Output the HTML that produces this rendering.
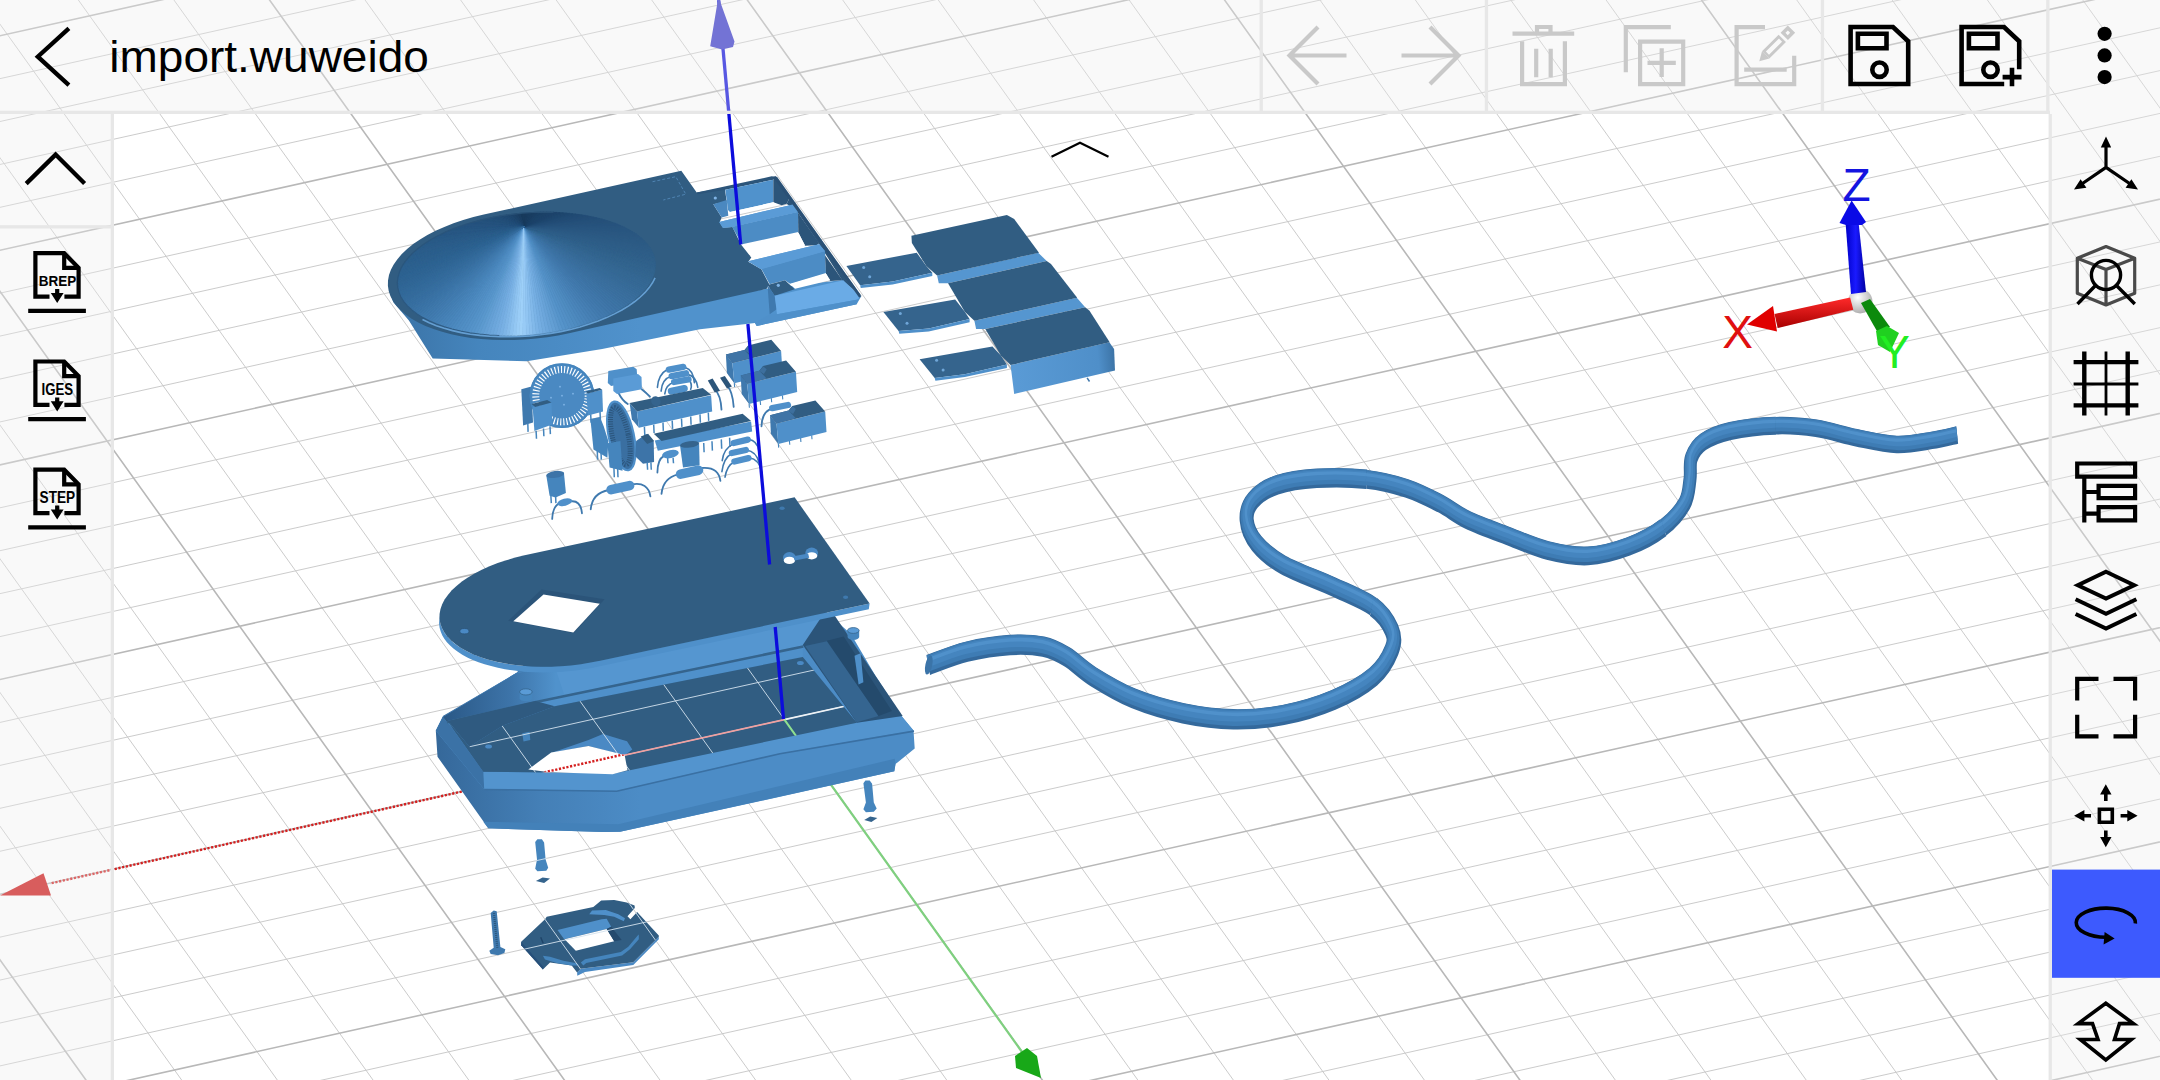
<!DOCTYPE html><html><head><meta charset="utf-8"><title>import.wuweido</title><style>html,body{margin:0;padding:0;background:#fff;overflow:hidden}svg{display:block}</style></head><body><svg width="2160" height="1080" viewBox="0 0 2160 1080">
<rect width="2160" height="1080" fill="#fff"/>
<path d="M2377.4 -919.7L3961.1 1296.2M2486.0 -900.9L-2465.2 195.4M2295.2 -901.5L3879.2 1314.6M2512.4 -863.9L-2438.6 232.5M2213.1 -883.3L3797.2 1332.9M2538.8 -827.0L-2412.0 269.6M2130.9 -865.1L3715.2 1351.3M2565.2 -790.0L-2385.4 306.8M1966.5 -828.7L3551.1 1388.0M2618.0 -716.1L-2332.3 381.0M1884.3 -810.5L3469.1 1406.4M2644.4 -679.2L-2305.7 418.1M1802.1 -792.3L3387.0 1424.7M2670.8 -642.3L-2279.1 455.2M1719.8 -774.1L3305.0 1443.1M2697.2 -605.3L-2252.5 492.3M1555.3 -737.7L3140.8 1479.8M2750.0 -531.4L-2199.3 566.5M1473.0 -719.4L3058.7 1498.2M2776.4 -494.5L-2172.8 603.6M1390.7 -701.2L2976.6 1516.6M2802.8 -457.5L-2146.2 640.7M1308.4 -683.0L2894.4 1535.0M2829.2 -420.6L-2119.6 677.8M1143.8 -646.5L2730.1 1571.8M2882.0 -346.7L-2066.5 752.0M1061.4 -628.3L2648.0 1590.2M2908.4 -309.8L-2039.9 789.1M979.0 -610.1L2565.8 1608.5M2934.8 -272.8L-2013.3 826.2M896.7 -591.8L2483.6 1626.9M2961.2 -235.9L-1986.7 863.3M731.9 -555.4L2319.1 1663.8M3014.0 -162.0L-1933.6 937.5M649.5 -537.1L2236.9 1682.2M3040.4 -125.1L-1907.0 974.6M567.1 -518.9L2154.7 1700.6M3066.8 -88.2L-1880.4 1011.7M484.6 -500.6L2072.4 1719.0M3093.2 -51.2L-1853.9 1048.8M319.7 -464.1L1907.8 1755.8M3146.0 22.6L-1800.7 1123.0M237.2 -445.9L1825.5 1774.2M3172.4 59.6L-1774.1 1160.1M154.7 -427.6L1743.2 1792.7M3198.8 96.5L-1747.6 1197.2M72.2 -409.3L1660.9 1811.1M3225.2 133.4L-1721.0 1234.3M-92.8 -372.8L1496.2 1848.0M3278.0 207.3L-1667.9 1308.5M-175.3 -354.5L1413.8 1866.4M3304.4 244.2L-1641.3 1345.6M-257.9 -336.2L1331.5 1884.8M3330.7 281.1L-1614.7 1382.7M-340.5 -318.0L1249.1 1903.3M3357.1 318.1L-1588.2 1419.7M-505.6 -281.4L1084.3 1940.2M3409.9 391.9L-1535.0 1493.9M-588.2 -263.1L1001.8 1958.6M3436.3 428.8L-1508.5 1531.0M-670.9 -244.8L919.4 1977.1M3462.7 465.8L-1481.9 1568.1M-753.5 -226.5L836.9 1995.5M3489.1 502.7L-1455.3 1605.2M-918.8 -189.9L672.0 2032.4M3541.9 576.5L-1402.2 1679.3M-1001.5 -171.6L589.5 2050.9M3568.2 613.4L-1375.6 1716.4M-1084.2 -153.3L507.0 2069.4M3594.6 650.4L-1349.1 1753.5M-1166.8 -135.0L424.5 2087.8M3621.0 687.3L-1322.5 1790.6M-1332.3 -98.4L259.4 2124.8M3673.8 761.1L-1269.4 1864.7M-1415.0 -80.1L176.8 2143.3M3700.2 798.0L-1242.8 1901.8M-1497.8 -61.8L94.3 2161.8M3726.6 834.9L-1216.3 1938.9M-1580.5 -43.4L11.7 2180.2M3752.9 871.9L-1189.7 1976.0M-1746.1 -6.8L-153.5 2217.2M3805.7 945.7L-1136.6 2050.1M-1828.9 11.6L-236.2 2235.7M3832.1 982.6L-1110.0 2087.2M-1911.7 29.9L-318.8 2254.2M3858.5 1019.5L-1083.5 2124.3M-1994.5 48.2L-401.4 2272.7M3884.8 1056.4L-1056.9 2161.4M-2160.2 84.9L-566.8 2309.7M3937.6 1130.2L-1003.8 2235.5M-2243.1 103.3L-649.5 2328.2M3964.0 1167.1L-977.3 2272.6M-2326.0 121.6L-732.2 2346.7M3990.4 1204.1L-950.7 2309.6M-2408.9 140.0L-814.9 2365.3M4016.7 1241.0L-924.2 2346.7" stroke="#c8c8c8" stroke-width="0.95" fill="none"/>
<path d="M2459.5 -937.8L4043.1 1277.9M2459.5 -937.8L-2491.8 158.3M2048.7 -846.9L3633.2 1369.6M2591.6 -753.1L-2358.8 343.9M1637.6 -755.9L3222.9 1461.5M2723.6 -568.4L-2225.9 529.4M1226.1 -664.8L2812.3 1553.4M2855.6 -383.7L-2093.0 714.9M814.3 -573.6L2401.4 1645.3M2987.6 -199.0L-1960.1 900.4M402.2 -482.4L1990.1 1737.4M3119.6 -14.3L-1827.3 1085.9M-10.3 -391.1L1578.6 1829.5M3251.6 170.4L-1694.4 1271.4M-423.0 -299.7L1166.7 1921.7M3383.5 355.0L-1561.6 1456.8M-836.1 -208.2L754.5 2014.0M3515.5 539.6L-1428.8 1642.3M-1249.6 -116.7L341.9 2106.3M3647.4 724.2L-1296.0 1827.7M-1663.3 -25.1L-70.9 2198.7M3779.3 908.8L-1163.2 2013.1M-2077.4 66.6L-484.1 2291.2M3911.2 1093.3L-1030.4 2198.4M-2491.8 158.3L-897.6 2383.8M4043.1 1277.9L-897.6 2383.8" stroke="#b8b8b8" stroke-width="1.6" fill="none"/>
<path d="M784.4 719.6L50.0 883.5" stroke="#d42020" stroke-width="2.4" stroke-dasharray="2.2 1.6" fill="none"/>
<path d="M0.0 895.5 L43.5 873.3 L51.0 895.5Z" fill="#ce1313" />
<path d="M784.4 719.6L1022.0 1052.0" stroke="#7fd07f" stroke-width="2.2" fill="none"/>
<path d="M1015.0 1056.0 L1027.0 1048.0 L1037.0 1056.0 L1041.0 1078.0 L1016.0 1068.0Z" fill="#18a818" />
<clipPath id="belowclip"><path d="M469.4 746.7L503.1 725.6L554.8 706.3L802.8 656.9L856.9 722.7L627.5 770.8L615.8 773.3L483.3 771.7Z"/></clipPath><clipPath id="belowclip2"><path d="M521.2 941.7L545.0 919.2L546.7 916.7L593.3 907.1L601.2 900.4L614.2 900.0L626.7 902.5L634.6 905.4L634.8 907.9L627.5 916.2L630.4 919.3L637.1 912.1L658.8 935.4L658.8 936.8L633.3 962.3L580.8 968.8L577.1 972.5L571.7 965.4L550.0 962.5L542.9 969.6L521.2 945.2ZM535.2 852.2L545.6 852.2L548.2 867.8L546.3 870.7L537.4 871.2L535.2 868.8ZM864.9 795.4L873.8 795.4L876.7 808.6L873.8 811.7L865.9 812.2L863.4 809.3Z"/></clipPath>
<defs>
<linearGradient id="wallg" gradientUnits="userSpaceOnUse" x1="390" y1="0" x2="640" y2="0"><stop offset="0" stop-color="#3a72a5"/><stop offset="0.35" stop-color="#4585bd"/><stop offset="1" stop-color="#5092cc"/></linearGradient>
</defs>
<path d="M389.3 291.1L393.3 302.2L408.9 320.4L432.7 358.4L526.7 361.3L602.2 348.9L700.0 329.3L755.0 323.0L756.7 326.0L856.7 304.3L860.8 297.0L842.5 280.0L766.7 288.7L700.0 300.0L535.6 271.1L402.2 266.7Z" fill="url(#wallg)" />
<path d="M569.0 333.3L558.2 335.4L547.3 337.2L536.2 338.6L525.0 339.5L513.9 340.0L502.8 340.1L491.9 339.8L481.2 339.0L470.8 337.9L460.8 336.3L451.2 334.2L442.1 331.8L433.5 329.1L425.5 325.9L418.2 322.5L411.6 318.7L405.7 314.6L400.7 310.3L396.4 305.7L393.0 300.9L390.4 296.0L388.7 290.9L387.9 285.7L388.0 280.4L389.0 275.1L390.9 269.7L393.7 264.4L397.4 259.2L401.8 254.0L407.1 249.0L413.2 244.1L420.0 239.5L427.4 235.0L435.6 230.8L444.3 226.9L453.5 223.3L463.2 220.0L473.4 217.1L483.8 214.5L681.3 170.8L696.7 192.5L724.7 187.7L726.7 201.7L713.3 204.2L721.7 217.5L719.7 222.0L723.3 227.5L732.5 227.0L740.8 244.2L751.3 257.5L748.3 261.7L761.3 269.2L769.2 284.2L766.7 288.8Z" fill="#315d82" />
<path d="M772.7 176.7L777.0 176.7L861.7 296.3L842.5 280.7L819.2 244.2L798.0 212.7L786.7 203.7L790.0 197.0Z" fill="#2c557a" />
<path d="M696.7 192.5L771.7 176.3L776.3 177.0L773.3 179.7L725.3 189.7L697.5 194.3Z" fill="#2c557a" />
<path d="M725.3 189.7L773.3 179.7L773.3 202.3L730.0 212.0L728.0 210.0Z" fill="#5092cc" />
<path d="M773.3 179.7L776.3 177.0L790.0 197.0L786.7 203.7L781.7 205.3L773.3 202.3Z" fill="#2c557a" />
<path d="M730.0 212.0L773.3 202.3L778.0 204.7L730.8 215.8Z" fill="#fff" />
<path d="M719.2 222.0L794.2 204.2L798.0 212.0L732.0 227.0L722.8 227.7Z" fill="#5a9bd6" />
<path d="M732.0 226.7L798.0 211.7L798.3 232.0L742.0 244.3Z" fill="#4c8cc5" />
<path d="M719.2 222.0L794.2 204.2L798.0 212.0L732.0 227.0L722.8 227.7Z" fill="#5a9bd6" />
<path d="M798.0 212.7L819.2 243.3L816.7 245.3L805.0 245.8L798.3 232.3Z" fill="#2c557a" />
<path d="M743.0 245.0L798.3 232.7L805.0 245.3L751.3 257.0Z" fill="#fff" />
<path d="M748.3 261.2L819.2 244.2L825.0 251.3L761.3 269.2Z" fill="#5a9bd6" />
<path d="M761.3 268.7L825.0 250.8L826.0 273.0L790.0 283.7L785.0 280.3L769.7 284.2Z" fill="#4c8cc5" />
<path d="M748.3 261.2L819.2 244.2L825.0 251.3L761.3 269.2Z" fill="#5a9bd6" />
<path d="M825.0 255.3L840.0 276.7L842.5 280.3L830.0 281.0L826.0 273.3Z" fill="#2c557a" />
<path d="M790.0 284.2L826.0 273.7L830.3 280.3L795.0 288.7Z" fill="#fff" />
<path d="M767.5 285.0L785.0 280.3L794.7 289.2L774.7 295.7Z" fill="#315d82" />
<path d="M767.5 285.3L774.7 295.7L776.7 309.2L769.7 314.2Z" fill="#3f79ae" />
<path d="M774.7 295.8L843.3 280.3L860.8 297.0L856.7 299.7L777.0 314.2Z" fill="#6aabe6" />
<path d="M777.0 314.2L856.7 299.7L856.7 304.3L756.7 326.0L755.0 323.0L769.7 314.2Z" fill="#4f90ca" />
<path d="M774.3 176.7L860.3 297.0" fill="none" stroke="#2a5075" stroke-width="2.6" />
<path d="M713.3 204.2L726.7 200.0L728.3 215.8L721.7 217.5Z" fill="#4a88c0" />
<circle cx="715.3" cy="198.0" r="1.6" fill="#7fb4e6"/>
<circle cx="778.3" cy="285.3" r="1.6" fill="#7fb4e6"/>
<path d="M652.5 181.7L675.8 176.7L685.8 194.2L663.3 200.0" fill="none" stroke="#4f84b3" stroke-width="1" stroke-dasharray="3 2"/>
<path d="M524.4 226.7L403.6 301.3L404.7 302.8Z" fill="#366d9e" stroke="#366d9e" stroke-width="0.6"/>
<path d="M524.4 226.7L404.7 302.8L405.9 304.2Z" fill="#366e9f" stroke="#366e9f" stroke-width="0.6"/>
<path d="M524.4 226.7L405.9 304.2L407.1 305.6Z" fill="#376fa0" stroke="#376fa0" stroke-width="0.6"/>
<path d="M524.4 226.7L407.1 305.6L408.4 306.9Z" fill="#376fa1" stroke="#376fa1" stroke-width="0.6"/>
<path d="M524.4 226.7L408.4 306.9L409.8 308.3Z" fill="#3870a2" stroke="#3870a2" stroke-width="0.6"/>
<path d="M524.4 226.7L409.8 308.3L411.3 309.6Z" fill="#3971a3" stroke="#3971a3" stroke-width="0.6"/>
<path d="M524.4 226.7L411.3 309.6L412.9 310.9Z" fill="#3a72a4" stroke="#3a72a4" stroke-width="0.6"/>
<path d="M524.4 226.7L412.9 310.9L414.5 312.2Z" fill="#3a73a6" stroke="#3a73a6" stroke-width="0.6"/>
<path d="M524.4 226.7L414.5 312.2L416.3 313.5Z" fill="#3b74a7" stroke="#3b74a7" stroke-width="0.6"/>
<path d="M524.4 226.7L416.3 313.5L418.1 314.7Z" fill="#3c75a8" stroke="#3c75a8" stroke-width="0.6"/>
<path d="M524.4 226.7L418.1 314.7L419.9 315.9Z" fill="#3d76aa" stroke="#3d76aa" stroke-width="0.6"/>
<path d="M524.4 226.7L419.9 315.9L421.9 317.1Z" fill="#3e78ab" stroke="#3e78ab" stroke-width="0.6"/>
<path d="M524.4 226.7L421.9 317.1L423.9 318.2Z" fill="#3f79ac" stroke="#3f79ac" stroke-width="0.6"/>
<path d="M524.4 226.7L423.9 318.2L426.0 319.3Z" fill="#407aae" stroke="#407aae" stroke-width="0.6"/>
<path d="M524.4 226.7L426.0 319.3L428.1 320.4Z" fill="#417baf" stroke="#417baf" stroke-width="0.6"/>
<path d="M524.4 226.7L428.1 320.4L430.4 321.4Z" fill="#427cb1" stroke="#427cb1" stroke-width="0.6"/>
<path d="M524.4 226.7L430.4 321.4L432.6 322.4Z" fill="#437eb2" stroke="#437eb2" stroke-width="0.6"/>
<path d="M524.4 226.7L432.6 322.4L435.0 323.4Z" fill="#447fb4" stroke="#447fb4" stroke-width="0.6"/>
<path d="M524.4 226.7L435.0 323.4L437.4 324.4Z" fill="#4580b5" stroke="#4580b5" stroke-width="0.6"/>
<path d="M524.4 226.7L437.4 324.4L439.9 325.3Z" fill="#4682b7" stroke="#4682b7" stroke-width="0.6"/>
<path d="M524.4 226.7L439.9 325.3L442.4 326.2Z" fill="#4783b8" stroke="#4783b8" stroke-width="0.6"/>
<path d="M524.4 226.7L442.4 326.2L445.0 327.0Z" fill="#4885ba" stroke="#4885ba" stroke-width="0.6"/>
<path d="M524.4 226.7L445.0 327.0L447.7 327.8Z" fill="#4986bc" stroke="#4986bc" stroke-width="0.6"/>
<path d="M524.4 226.7L447.7 327.8L450.4 328.6Z" fill="#4a87bd" stroke="#4a87bd" stroke-width="0.6"/>
<path d="M524.4 226.7L450.4 328.6L453.1 329.3Z" fill="#4c89bf" stroke="#4c89bf" stroke-width="0.6"/>
<path d="M524.4 226.7L453.1 329.3L455.9 330.0Z" fill="#4d8bc1" stroke="#4d8bc1" stroke-width="0.6"/>
<path d="M524.4 226.7L455.9 330.0L458.8 330.6Z" fill="#4f8cc2" stroke="#4f8cc2" stroke-width="0.6"/>
<path d="M524.4 226.7L458.8 330.6L461.7 331.3Z" fill="#508ec4" stroke="#508ec4" stroke-width="0.6"/>
<path d="M524.4 226.7L461.7 331.3L464.6 331.8Z" fill="#528fc5" stroke="#528fc5" stroke-width="0.6"/>
<path d="M524.4 226.7L464.6 331.8L467.6 332.4Z" fill="#5391c7" stroke="#5391c7" stroke-width="0.6"/>
<path d="M524.4 226.7L467.6 332.4L470.6 332.9Z" fill="#5593c9" stroke="#5593c9" stroke-width="0.6"/>
<path d="M524.4 226.7L470.6 332.9L473.7 333.3Z" fill="#5795cb" stroke="#5795cb" stroke-width="0.6"/>
<path d="M524.4 226.7L473.7 333.3L476.8 333.7Z" fill="#5997cd" stroke="#5997cd" stroke-width="0.6"/>
<path d="M524.4 226.7L476.8 333.7L479.9 334.1Z" fill="#5c9acf" stroke="#5c9acf" stroke-width="0.6"/>
<path d="M524.4 226.7L479.9 334.1L483.1 334.4Z" fill="#609dd2" stroke="#609dd2" stroke-width="0.6"/>
<path d="M524.4 226.7L483.1 334.4L486.3 334.7Z" fill="#64a0d5" stroke="#64a0d5" stroke-width="0.6"/>
<path d="M524.4 226.7L486.3 334.7L489.5 335.0Z" fill="#68a3d8" stroke="#68a3d8" stroke-width="0.6"/>
<path d="M524.4 226.7L489.5 335.0L492.8 335.2Z" fill="#6ca6db" stroke="#6ca6db" stroke-width="0.6"/>
<path d="M524.4 226.7L492.8 335.2L496.0 335.4Z" fill="#6fa9de" stroke="#6fa9de" stroke-width="0.6"/>
<path d="M524.4 226.7L496.0 335.4L499.3 335.5Z" fill="#74ace1" stroke="#74ace1" stroke-width="0.6"/>
<path d="M524.4 226.7L499.3 335.5L502.6 335.6Z" fill="#78b0e4" stroke="#78b0e4" stroke-width="0.6"/>
<path d="M524.4 226.7L502.6 335.6L506.0 335.6Z" fill="#7eb5e7" stroke="#7eb5e7" stroke-width="0.6"/>
<path d="M524.4 226.7L506.0 335.6L509.3 335.6Z" fill="#85bbeb" stroke="#85bbeb" stroke-width="0.6"/>
<path d="M524.4 226.7L509.3 335.6L512.7 335.6Z" fill="#8cc1ef" stroke="#8cc1ef" stroke-width="0.6"/>
<path d="M524.4 226.7L512.7 335.6L516.0 335.5Z" fill="#93c7f3" stroke="#93c7f3" stroke-width="0.6"/>
<path d="M524.4 226.7L516.0 335.5L519.4 335.3Z" fill="#9acdf7" stroke="#9acdf7" stroke-width="0.6"/>
<path d="M524.4 226.7L519.4 335.3L522.8 335.2Z" fill="#9fd1f9" stroke="#9fd1f9" stroke-width="0.6"/>
<path d="M524.4 226.7L522.8 335.2L526.2 334.9Z" fill="#98cbf6" stroke="#98cbf6" stroke-width="0.6"/>
<path d="M524.4 226.7L526.2 334.9L529.5 334.7Z" fill="#91c5f2" stroke="#91c5f2" stroke-width="0.6"/>
<path d="M524.4 226.7L529.5 334.7L532.9 334.4Z" fill="#8abfee" stroke="#8abfee" stroke-width="0.6"/>
<path d="M524.4 226.7L532.9 334.4L536.3 334.1Z" fill="#82b9ea" stroke="#82b9ea" stroke-width="0.6"/>
<path d="M524.4 226.7L536.3 334.1L539.6 333.7Z" fill="#7bb3e6" stroke="#7bb3e6" stroke-width="0.6"/>
<path d="M524.4 226.7L539.6 333.7L543.0 333.2Z" fill="#75aee2" stroke="#75aee2" stroke-width="0.6"/>
<path d="M524.4 226.7L543.0 333.2L546.3 332.8Z" fill="#71aade" stroke="#71aade" stroke-width="0.6"/>
<path d="M524.4 226.7L546.3 332.8L549.7 332.3Z" fill="#6ca6db" stroke="#6ca6db" stroke-width="0.6"/>
<path d="M524.4 226.7L549.7 332.3L553.0 331.7Z" fill="#68a2d7" stroke="#68a2d7" stroke-width="0.6"/>
<path d="M524.4 226.7L553.0 331.7L556.3 331.2Z" fill="#639fd4" stroke="#639fd4" stroke-width="0.6"/>
<path d="M524.4 226.7L556.3 331.2L559.6 330.5Z" fill="#5f9bd0" stroke="#5f9bd0" stroke-width="0.6"/>
<path d="M524.4 226.7L559.6 330.5L562.8 329.9Z" fill="#5a97cd" stroke="#5a97cd" stroke-width="0.6"/>
<path d="M524.4 226.7L562.8 329.9L566.0 329.2Z" fill="#5694ca" stroke="#5694ca" stroke-width="0.6"/>
<path d="M524.4 226.7L566.0 329.2L569.2 328.4Z" fill="#5391c7" stroke="#5391c7" stroke-width="0.6"/>
<path d="M524.4 226.7L569.2 328.4L572.4 327.7Z" fill="#528fc5" stroke="#528fc5" stroke-width="0.6"/>
<path d="M524.4 226.7L572.4 327.7L575.5 326.9Z" fill="#508dc2" stroke="#508dc2" stroke-width="0.6"/>
<path d="M524.4 226.7L575.5 326.9L578.7 326.0Z" fill="#4e8bc0" stroke="#4e8bc0" stroke-width="0.6"/>
<path d="M524.4 226.7L578.7 326.0L581.7 325.1Z" fill="#4d89be" stroke="#4d89be" stroke-width="0.6"/>
<path d="M524.4 226.7L581.7 325.1L584.8 324.2Z" fill="#4b87bc" stroke="#4b87bc" stroke-width="0.6"/>
<path d="M524.4 226.7L584.8 324.2L587.7 323.3Z" fill="#4a85ba" stroke="#4a85ba" stroke-width="0.6"/>
<path d="M524.4 226.7L587.7 323.3L590.7 322.3Z" fill="#4983b8" stroke="#4983b8" stroke-width="0.6"/>
<path d="M524.4 226.7L590.7 322.3L593.6 321.3Z" fill="#4781b6" stroke="#4781b6" stroke-width="0.6"/>
<path d="M524.4 226.7L593.6 321.3L596.5 320.2Z" fill="#467fb4" stroke="#467fb4" stroke-width="0.6"/>
<path d="M524.4 226.7L596.5 320.2L599.3 319.1Z" fill="#457eb2" stroke="#457eb2" stroke-width="0.6"/>
<path d="M524.4 226.7L599.3 319.1L602.0 318.0Z" fill="#437cb0" stroke="#437cb0" stroke-width="0.6"/>
<path d="M524.4 226.7L602.0 318.0L604.7 316.9Z" fill="#427aae" stroke="#427aae" stroke-width="0.6"/>
<path d="M524.4 226.7L604.7 316.9L607.4 315.7Z" fill="#4179ad" stroke="#4179ad" stroke-width="0.6"/>
<path d="M524.4 226.7L607.4 315.7L610.0 314.5Z" fill="#4078ab" stroke="#4078ab" stroke-width="0.6"/>
<path d="M524.4 226.7L610.0 314.5L612.5 313.2Z" fill="#4077aa" stroke="#4077aa" stroke-width="0.6"/>
<path d="M524.4 226.7L612.5 313.2L615.0 312.0Z" fill="#3f76a9" stroke="#3f76a9" stroke-width="0.6"/>
<path d="M524.4 226.7L615.0 312.0L617.5 310.7Z" fill="#3e75a7" stroke="#3e75a7" stroke-width="0.6"/>
<path d="M524.4 226.7L617.5 310.7L619.8 309.4Z" fill="#3e74a6" stroke="#3e74a6" stroke-width="0.6"/>
<path d="M524.4 226.7L619.8 309.4L622.1 308.1Z" fill="#3d74a5" stroke="#3d74a5" stroke-width="0.6"/>
<path d="M524.4 226.7L622.1 308.1L624.3 306.7Z" fill="#3d73a4" stroke="#3d73a4" stroke-width="0.6"/>
<path d="M524.4 226.7L624.3 306.7L626.5 305.3Z" fill="#3c72a2" stroke="#3c72a2" stroke-width="0.6"/>
<path d="M524.4 226.7L626.5 305.3L628.6 303.9Z" fill="#3c71a1" stroke="#3c71a1" stroke-width="0.6"/>
<path d="M524.4 226.7L628.6 303.9L630.6 302.5Z" fill="#3b70a0" stroke="#3b70a0" stroke-width="0.6"/>
<path d="M524.4 226.7L630.6 302.5L632.6 301.1Z" fill="#3b709f" stroke="#3b709f" stroke-width="0.6"/>
<path d="M524.4 226.7L632.6 301.1L634.5 299.6Z" fill="#3a6f9e" stroke="#3a6f9e" stroke-width="0.6"/>
<path d="M524.4 226.7L634.5 299.6L636.3 298.1Z" fill="#3a6e9d" stroke="#3a6e9d" stroke-width="0.6"/>
<path d="M524.4 226.7L636.3 298.1L638.0 296.6Z" fill="#396e9c" stroke="#396e9c" stroke-width="0.6"/>
<path d="M524.4 226.7L638.0 296.6L639.7 295.1Z" fill="#396d9b" stroke="#396d9b" stroke-width="0.6"/>
<path d="M524.4 226.7L639.7 295.1L641.2 293.6Z" fill="#386c9a" stroke="#386c9a" stroke-width="0.6"/>
<path d="M524.4 226.7L641.2 293.6L642.7 292.1Z" fill="#386c99" stroke="#386c99" stroke-width="0.6"/>
<path d="M524.4 226.7L642.7 292.1L644.2 290.5Z" fill="#376b98" stroke="#376b98" stroke-width="0.6"/>
<path d="M524.4 226.7L644.2 290.5L645.5 289.0Z" fill="#376a97" stroke="#376a97" stroke-width="0.6"/>
<path d="M524.4 226.7L645.5 289.0L646.8 287.4Z" fill="#366a96" stroke="#366a96" stroke-width="0.6"/>
<path d="M524.4 226.7L646.8 287.4L647.9 285.8Z" fill="#366995" stroke="#366995" stroke-width="0.6"/>
<path d="M524.4 226.7L647.9 285.8L649.0 284.2Z" fill="#366995" stroke="#366995" stroke-width="0.6"/>
<path d="M524.4 226.7L649.0 284.2L650.0 282.6Z" fill="#356894" stroke="#356894" stroke-width="0.6"/>
<path d="M524.4 226.7L650.0 282.6L651.0 281.0Z" fill="#356893" stroke="#356893" stroke-width="0.6"/>
<path d="M524.4 226.7L651.0 281.0L651.8 279.4Z" fill="#346792" stroke="#346792" stroke-width="0.6"/>
<path d="M524.4 226.7L651.8 279.4L652.5 277.8Z" fill="#346791" stroke="#346791" stroke-width="0.6"/>
<path d="M524.4 226.7L652.5 277.8L653.2 276.2Z" fill="#346690" stroke="#346690" stroke-width="0.6"/>
<path d="M524.4 226.7L653.2 276.2L653.8 274.6Z" fill="#336590" stroke="#336590" stroke-width="0.6"/>
<path d="M524.4 226.7L653.8 274.6L654.3 273.0Z" fill="#33658f" stroke="#33658f" stroke-width="0.6"/>
<path d="M524.4 226.7L654.3 273.0L654.7 271.3Z" fill="#33648e" stroke="#33648e" stroke-width="0.6"/>
<path d="M524.4 226.7L654.7 271.3L655.0 269.7Z" fill="#32648e" stroke="#32648e" stroke-width="0.6"/>
<path d="M524.4 226.7L655.0 269.7L655.2 268.1Z" fill="#32638d" stroke="#32638d" stroke-width="0.6"/>
<path d="M524.4 226.7L655.2 268.1L655.4 266.5Z" fill="#31638d" stroke="#31638d" stroke-width="0.6"/>
<path d="M524.4 226.7L655.4 266.5L655.4 264.9Z" fill="#31628c" stroke="#31628c" stroke-width="0.6"/>
<path d="M524.4 226.7L655.4 264.9L655.4 263.3Z" fill="#31628c" stroke="#31628c" stroke-width="0.6"/>
<path d="M524.4 226.7L655.4 263.3L655.3 261.7Z" fill="#30618b" stroke="#30618b" stroke-width="0.6"/>
<path d="M524.4 226.7L655.3 261.7L655.0 260.1Z" fill="#30608a" stroke="#30608a" stroke-width="0.6"/>
<path d="M524.4 226.7L655.0 260.1L654.7 258.6Z" fill="#30608a" stroke="#30608a" stroke-width="0.6"/>
<path d="M524.4 226.7L654.7 258.6L654.3 257.0Z" fill="#2f5f89" stroke="#2f5f89" stroke-width="0.6"/>
<path d="M524.4 226.7L654.3 257.0L653.9 255.5Z" fill="#2f5f89" stroke="#2f5f89" stroke-width="0.6"/>
<path d="M524.4 226.7L653.9 255.5L653.3 253.9Z" fill="#2f5e88" stroke="#2f5e88" stroke-width="0.6"/>
<path d="M524.4 226.7L653.3 253.9L652.6 252.4Z" fill="#2e5e88" stroke="#2e5e88" stroke-width="0.6"/>
<path d="M524.4 226.7L652.6 252.4L651.9 250.9Z" fill="#2e5d87" stroke="#2e5d87" stroke-width="0.6"/>
<path d="M524.4 226.7L651.9 250.9L651.1 249.4Z" fill="#2e5d87" stroke="#2e5d87" stroke-width="0.6"/>
<path d="M524.4 226.7L651.1 249.4L650.2 247.9Z" fill="#2d5c86" stroke="#2d5c86" stroke-width="0.6"/>
<path d="M524.4 226.7L650.2 247.9L649.2 246.5Z" fill="#2d5c86" stroke="#2d5c86" stroke-width="0.6"/>
<path d="M524.4 226.7L649.2 246.5L648.1 245.0Z" fill="#2d5b85" stroke="#2d5b85" stroke-width="0.6"/>
<path d="M524.4 226.7L648.1 245.0L646.9 243.6Z" fill="#2c5b85" stroke="#2c5b85" stroke-width="0.6"/>
<path d="M524.4 226.7L646.9 243.6L645.7 242.2Z" fill="#2c5a84" stroke="#2c5a84" stroke-width="0.6"/>
<path d="M524.4 226.7L645.7 242.2L644.4 240.9Z" fill="#2c5a84" stroke="#2c5a84" stroke-width="0.6"/>
<path d="M524.4 226.7L644.4 240.9L643.0 239.5Z" fill="#2c5983" stroke="#2c5983" stroke-width="0.6"/>
<path d="M524.4 226.7L643.0 239.5L641.5 238.2Z" fill="#2b5983" stroke="#2b5983" stroke-width="0.6"/>
<path d="M524.4 226.7L641.5 238.2L639.9 236.9Z" fill="#2b5983" stroke="#2b5983" stroke-width="0.6"/>
<path d="M524.4 226.7L639.9 236.9L638.3 235.6Z" fill="#2b5882" stroke="#2b5882" stroke-width="0.6"/>
<path d="M524.4 226.7L638.3 235.6L636.5 234.3Z" fill="#2a5882" stroke="#2a5882" stroke-width="0.6"/>
<path d="M524.4 226.7L636.5 234.3L634.7 233.1Z" fill="#2a5781" stroke="#2a5781" stroke-width="0.6"/>
<path d="M524.4 226.7L634.7 233.1L632.9 231.9Z" fill="#2a5781" stroke="#2a5781" stroke-width="0.6"/>
<path d="M524.4 226.7L632.9 231.9L630.9 230.7Z" fill="#295680" stroke="#295680" stroke-width="0.6"/>
<path d="M524.4 226.7L630.9 230.7L628.9 229.6Z" fill="#295680" stroke="#295680" stroke-width="0.6"/>
<path d="M524.4 226.7L628.9 229.6L626.8 228.5Z" fill="#29557f" stroke="#29557f" stroke-width="0.6"/>
<path d="M524.4 226.7L626.8 228.5L624.7 227.4Z" fill="#28557f" stroke="#28557f" stroke-width="0.6"/>
<path d="M524.4 226.7L624.7 227.4L622.4 226.4Z" fill="#28547e" stroke="#28547e" stroke-width="0.6"/>
<path d="M524.4 226.7L622.4 226.4L620.2 225.4Z" fill="#28547e" stroke="#28547e" stroke-width="0.6"/>
<path d="M524.4 226.7L620.2 225.4L617.8 224.4Z" fill="#27537d" stroke="#27537d" stroke-width="0.6"/>
<path d="M524.4 226.7L617.8 224.4L615.4 223.4Z" fill="#27537d" stroke="#27537d" stroke-width="0.6"/>
<path d="M524.4 226.7L615.4 223.4L612.9 222.5Z" fill="#27527c" stroke="#27527c" stroke-width="0.6"/>
<path d="M524.4 226.7L612.9 222.5L610.4 221.6Z" fill="#26527b" stroke="#26527b" stroke-width="0.6"/>
<path d="M524.4 226.7L610.4 221.6L607.8 220.8Z" fill="#26517b" stroke="#26517b" stroke-width="0.6"/>
<path d="M524.4 226.7L607.8 220.8L605.1 220.0Z" fill="#26517a" stroke="#26517a" stroke-width="0.6"/>
<path d="M524.4 226.7L605.1 220.0L602.4 219.2Z" fill="#25507a" stroke="#25507a" stroke-width="0.6"/>
<path d="M524.4 226.7L602.4 219.2L599.7 218.5Z" fill="#255079" stroke="#255079" stroke-width="0.6"/>
<path d="M524.4 226.7L599.7 218.5L596.9 217.8Z" fill="#244f78" stroke="#244f78" stroke-width="0.6"/>
<path d="M524.4 226.7L596.9 217.8L594.0 217.2Z" fill="#244e78" stroke="#244e78" stroke-width="0.6"/>
<path d="M524.4 226.7L594.0 217.2L591.1 216.5Z" fill="#244e77" stroke="#244e77" stroke-width="0.6"/>
<path d="M524.4 226.7L591.1 216.5L588.2 216.0Z" fill="#234d76" stroke="#234d76" stroke-width="0.6"/>
<path d="M524.4 226.7L588.2 216.0L585.2 215.4Z" fill="#234c75" stroke="#234c75" stroke-width="0.6"/>
<path d="M524.4 226.7L585.2 215.4L582.2 214.9Z" fill="#224c75" stroke="#224c75" stroke-width="0.6"/>
<path d="M524.4 226.7L582.2 214.9L579.1 214.5Z" fill="#214b74" stroke="#214b74" stroke-width="0.6"/>
<path d="M524.4 226.7L579.1 214.5L576.0 214.1Z" fill="#214a73" stroke="#214a73" stroke-width="0.6"/>
<path d="M524.4 226.7L576.0 214.1L572.9 213.7Z" fill="#204972" stroke="#204972" stroke-width="0.6"/>
<path d="M524.4 226.7L572.9 213.7L569.7 213.4Z" fill="#1f4870" stroke="#1f4870" stroke-width="0.6"/>
<path d="M524.4 226.7L569.7 213.4L566.5 213.1Z" fill="#1f476f" stroke="#1f476f" stroke-width="0.6"/>
<path d="M524.4 226.7L566.5 213.1L563.3 212.8Z" fill="#1e466e" stroke="#1e466e" stroke-width="0.6"/>
<path d="M524.4 226.7L563.3 212.8L560.0 212.6Z" fill="#1d446c" stroke="#1d446c" stroke-width="0.6"/>
<path d="M524.4 226.7L560.0 212.6L556.8 212.4Z" fill="#1c436b" stroke="#1c436b" stroke-width="0.6"/>
<path d="M524.4 226.7L556.8 212.4L553.5 212.3Z" fill="#1c426a" stroke="#1c426a" stroke-width="0.6"/>
<path d="M524.4 226.7L553.5 212.3L550.2 212.2Z" fill="#1b4269" stroke="#1b4269" stroke-width="0.6"/>
<path d="M524.4 226.7L550.2 212.2L546.8 212.2Z" fill="#1b4168" stroke="#1b4168" stroke-width="0.6"/>
<path d="M524.4 226.7L546.8 212.2L543.5 212.2Z" fill="#1b4167" stroke="#1b4167" stroke-width="0.6"/>
<path d="M524.4 226.7L543.5 212.2L540.1 212.2Z" fill="#1a4066" stroke="#1a4066" stroke-width="0.6"/>
<path d="M524.4 226.7L540.1 212.2L536.8 212.3Z" fill="#1a3f64" stroke="#1a3f64" stroke-width="0.6"/>
<path d="M524.4 226.7L536.8 212.3L533.4 212.5Z" fill="#193d62" stroke="#193d62" stroke-width="0.6"/>
<path d="M524.4 226.7L533.4 212.5L530.0 212.6Z" fill="#183c60" stroke="#183c60" stroke-width="0.6"/>
<path d="M524.4 226.7L530.0 212.6L526.6 212.9Z" fill="#173b5e" stroke="#173b5e" stroke-width="0.6"/>
<path d="M524.4 226.7L526.6 212.9L523.3 213.1Z" fill="#17395c" stroke="#17395c" stroke-width="0.6"/>
<path d="M524.4 226.7L523.3 213.1L519.9 213.4Z" fill="#16395b" stroke="#16395b" stroke-width="0.6"/>
<path d="M524.4 226.7L519.9 213.4L516.5 213.7Z" fill="#193d61" stroke="#193d61" stroke-width="0.6"/>
<path d="M524.4 226.7L516.5 213.7L513.2 214.1Z" fill="#1b4066" stroke="#1b4066" stroke-width="0.6"/>
<path d="M524.4 226.7L513.2 214.1L509.8 214.6Z" fill="#1c436a" stroke="#1c436a" stroke-width="0.6"/>
<path d="M524.4 226.7L509.8 214.6L506.5 215.0Z" fill="#1e466e" stroke="#1e466e" stroke-width="0.6"/>
<path d="M524.4 226.7L506.5 215.0L503.1 215.5Z" fill="#1f4871" stroke="#1f4871" stroke-width="0.6"/>
<path d="M524.4 226.7L503.1 215.5L499.8 216.1Z" fill="#204a73" stroke="#204a73" stroke-width="0.6"/>
<path d="M524.4 226.7L499.8 216.1L496.5 216.6Z" fill="#214b75" stroke="#214b75" stroke-width="0.6"/>
<path d="M524.4 226.7L496.5 216.6L493.2 217.3Z" fill="#224d77" stroke="#224d77" stroke-width="0.6"/>
<path d="M524.4 226.7L493.2 217.3L490.0 217.9Z" fill="#224e78" stroke="#224e78" stroke-width="0.6"/>
<path d="M524.4 226.7L490.0 217.9L486.8 218.6Z" fill="#234f79" stroke="#234f79" stroke-width="0.6"/>
<path d="M524.4 226.7L486.8 218.6L483.6 219.4Z" fill="#23507a" stroke="#23507a" stroke-width="0.6"/>
<path d="M524.4 226.7L483.6 219.4L480.4 220.1Z" fill="#24507b" stroke="#24507b" stroke-width="0.6"/>
<path d="M524.4 226.7L480.4 220.1L477.3 220.9Z" fill="#24517c" stroke="#24517c" stroke-width="0.6"/>
<path d="M524.4 226.7L477.3 220.9L474.1 221.8Z" fill="#25527d" stroke="#25527d" stroke-width="0.6"/>
<path d="M524.4 226.7L474.1 221.8L471.1 222.7Z" fill="#25527d" stroke="#25527d" stroke-width="0.6"/>
<path d="M524.4 226.7L471.1 222.7L468.0 223.6Z" fill="#25537e" stroke="#25537e" stroke-width="0.6"/>
<path d="M524.4 226.7L468.0 223.6L465.1 224.5Z" fill="#25537f" stroke="#25537f" stroke-width="0.6"/>
<path d="M524.4 226.7L465.1 224.5L462.1 225.5Z" fill="#26537f" stroke="#26537f" stroke-width="0.6"/>
<path d="M524.4 226.7L462.1 225.5L459.2 226.5Z" fill="#265480" stroke="#265480" stroke-width="0.6"/>
<path d="M524.4 226.7L459.2 226.5L456.3 227.6Z" fill="#265480" stroke="#265480" stroke-width="0.6"/>
<path d="M524.4 226.7L456.3 227.6L453.5 228.7Z" fill="#265581" stroke="#265581" stroke-width="0.6"/>
<path d="M524.4 226.7L453.5 228.7L450.8 229.8Z" fill="#275582" stroke="#275582" stroke-width="0.6"/>
<path d="M524.4 226.7L450.8 229.8L448.1 230.9Z" fill="#275682" stroke="#275682" stroke-width="0.6"/>
<path d="M524.4 226.7L448.1 230.9L445.4 232.1Z" fill="#275783" stroke="#275783" stroke-width="0.6"/>
<path d="M524.4 226.7L445.4 232.1L442.8 233.3Z" fill="#285784" stroke="#285784" stroke-width="0.6"/>
<path d="M524.4 226.7L442.8 233.3L440.3 234.6Z" fill="#285884" stroke="#285884" stroke-width="0.6"/>
<path d="M524.4 226.7L440.3 234.6L437.8 235.8Z" fill="#285885" stroke="#285885" stroke-width="0.6"/>
<path d="M524.4 226.7L437.8 235.8L435.3 237.1Z" fill="#285885" stroke="#285885" stroke-width="0.6"/>
<path d="M524.4 226.7L435.3 237.1L433.0 238.4Z" fill="#295986" stroke="#295986" stroke-width="0.6"/>
<path d="M524.4 226.7L433.0 238.4L430.7 239.7Z" fill="#295986" stroke="#295986" stroke-width="0.6"/>
<path d="M524.4 226.7L430.7 239.7L428.5 241.1Z" fill="#295a87" stroke="#295a87" stroke-width="0.6"/>
<path d="M524.4 226.7L428.5 241.1L426.3 242.5Z" fill="#295a87" stroke="#295a87" stroke-width="0.6"/>
<path d="M524.4 226.7L426.3 242.5L424.2 243.9Z" fill="#2a5b88" stroke="#2a5b88" stroke-width="0.6"/>
<path d="M524.4 226.7L424.2 243.9L422.2 245.3Z" fill="#2a5b88" stroke="#2a5b88" stroke-width="0.6"/>
<path d="M524.4 226.7L422.2 245.3L420.2 246.7Z" fill="#2a5c89" stroke="#2a5c89" stroke-width="0.6"/>
<path d="M524.4 226.7L420.2 246.7L418.3 248.2Z" fill="#2a5c89" stroke="#2a5c89" stroke-width="0.6"/>
<path d="M524.4 226.7L418.3 248.2L416.5 249.7Z" fill="#2a5c8a" stroke="#2a5c8a" stroke-width="0.6"/>
<path d="M524.4 226.7L416.5 249.7L414.8 251.2Z" fill="#2b5d8a" stroke="#2b5d8a" stroke-width="0.6"/>
<path d="M524.4 226.7L414.8 251.2L413.1 252.7Z" fill="#2b5d8b" stroke="#2b5d8b" stroke-width="0.6"/>
<path d="M524.4 226.7L413.1 252.7L411.6 254.2Z" fill="#2b5e8b" stroke="#2b5e8b" stroke-width="0.6"/>
<path d="M524.4 226.7L411.6 254.2L410.1 255.7Z" fill="#2b5e8c" stroke="#2b5e8c" stroke-width="0.6"/>
<path d="M524.4 226.7L410.1 255.7L408.6 257.3Z" fill="#2b5e8c" stroke="#2b5e8c" stroke-width="0.6"/>
<path d="M524.4 226.7L408.6 257.3L407.3 258.8Z" fill="#2c5f8d" stroke="#2c5f8d" stroke-width="0.6"/>
<path d="M524.4 226.7L407.3 258.8L406.0 260.4Z" fill="#2c5f8d" stroke="#2c5f8d" stroke-width="0.6"/>
<path d="M524.4 226.7L406.0 260.4L404.9 262.0Z" fill="#2c5f8d" stroke="#2c5f8d" stroke-width="0.6"/>
<path d="M524.4 226.7L404.9 262.0L403.8 263.6Z" fill="#2c608e" stroke="#2c608e" stroke-width="0.6"/>
<path d="M524.4 226.7L403.8 263.6L402.8 265.2Z" fill="#2c608e" stroke="#2c608e" stroke-width="0.6"/>
<path d="M524.4 226.7L402.8 265.2L401.8 266.8Z" fill="#2d618f" stroke="#2d618f" stroke-width="0.6"/>
<path d="M524.4 226.7L401.8 266.8L401.0 268.4Z" fill="#2d618f" stroke="#2d618f" stroke-width="0.6"/>
<path d="M524.4 226.7L401.0 268.4L400.3 270.0Z" fill="#2d6190" stroke="#2d6190" stroke-width="0.6"/>
<path d="M524.4 226.7L400.3 270.0L399.6 271.6Z" fill="#2d6290" stroke="#2d6290" stroke-width="0.6"/>
<path d="M524.4 226.7L399.6 271.6L399.0 273.2Z" fill="#2e6291" stroke="#2e6291" stroke-width="0.6"/>
<path d="M524.4 226.7L399.0 273.2L398.5 274.8Z" fill="#2e6391" stroke="#2e6391" stroke-width="0.6"/>
<path d="M524.4 226.7L398.5 274.8L398.1 276.5Z" fill="#2e6392" stroke="#2e6392" stroke-width="0.6"/>
<path d="M524.4 226.7L398.1 276.5L397.8 278.1Z" fill="#2e6392" stroke="#2e6392" stroke-width="0.6"/>
<path d="M524.4 226.7L397.8 278.1L397.6 279.7Z" fill="#2e6493" stroke="#2e6493" stroke-width="0.6"/>
<path d="M524.4 226.7L397.6 279.7L397.4 281.3Z" fill="#2f6493" stroke="#2f6493" stroke-width="0.6"/>
<path d="M524.4 226.7L397.4 281.3L397.4 282.9Z" fill="#2f6594" stroke="#2f6594" stroke-width="0.6"/>
<path d="M524.4 226.7L397.4 282.9L397.4 284.5Z" fill="#2f6594" stroke="#2f6594" stroke-width="0.6"/>
<path d="M524.4 226.7L397.4 284.5L397.5 286.1Z" fill="#306695" stroke="#306695" stroke-width="0.6"/>
<path d="M524.4 226.7L397.5 286.1L397.8 287.7Z" fill="#306696" stroke="#306696" stroke-width="0.6"/>
<path d="M524.4 226.7L397.8 287.7L398.1 289.2Z" fill="#316797" stroke="#316797" stroke-width="0.6"/>
<path d="M524.4 226.7L398.1 289.2L398.5 290.8Z" fill="#316897" stroke="#316897" stroke-width="0.6"/>
<path d="M524.4 226.7L398.5 290.8L398.9 292.3Z" fill="#326898" stroke="#326898" stroke-width="0.6"/>
<path d="M524.4 226.7L398.9 292.3L399.5 293.9Z" fill="#326999" stroke="#326999" stroke-width="0.6"/>
<path d="M524.4 226.7L399.5 293.9L400.2 295.4Z" fill="#336a9a" stroke="#336a9a" stroke-width="0.6"/>
<path d="M524.4 226.7L400.2 295.4L400.9 296.9Z" fill="#336a9b" stroke="#336a9b" stroke-width="0.6"/>
<path d="M524.4 226.7L400.9 296.9L401.7 298.4Z" fill="#346b9c" stroke="#346b9c" stroke-width="0.6"/>
<path d="M524.4 226.7L401.7 298.4L402.6 299.9Z" fill="#346c9c" stroke="#346c9c" stroke-width="0.6"/>
<path d="M524.4 226.7L402.6 299.9L403.6 301.3Z" fill="#356c9d" stroke="#356c9d" stroke-width="0.6"/>
<path d="M553.5 212.3L543.2 212.2L532.9 212.5L522.5 213.2L512.1 214.3L501.9 215.7L491.7 217.6L481.9 219.8L472.3 222.3L463.0 225.2L454.2 228.4L445.8 231.9L438.0 235.7L430.7 239.7L424.0 244.0L418.1 248.4L412.8 253.0L408.2 257.8L404.4 262.6L401.4 267.5L399.3 272.5L397.9 277.5L397.4 282.4L397.7 287.3L398.9 292.1L400.8 296.8L403.6 301.3L407.2 305.7L411.6 309.8L416.7 313.7L422.5 317.4L429.0 320.8L436.1 323.9L443.8 326.6L452.1 329.0L460.8 331.1L469.9 332.8L479.5 334.1L489.3 335.0L499.3 335.5" fill="none" stroke="#2a5479" stroke-width="1.2" opacity="0.8"/>
<path d="M422.5 319.5L429.2 322.7L436.4 325.7L444.2 328.3L452.5 330.6L461.2 332.6L470.3 334.2L479.8 335.4L489.6 336.3L499.6 336.7L509.7 336.8L520.0 336.5L530.3 335.9L540.5 334.8L550.7 333.4L560.8 331.6L570.6 329.4L580.1 326.9L589.4 324.1L598.2 321.0L606.6 317.6L614.5 313.9L621.9 310.0L628.7 305.9L634.8 301.5L640.3 297.0L645.1 292.4L649.2 287.6L652.5 282.8L655.1 277.9" fill="none" stroke="#6aa6dc" stroke-width="1.6" opacity="0.9"/>
<path d="M846.4 265.9L916.7 252.7L926.3 265.9L932.3 272.7L892.6 281.6L860.1 285.2Z" fill="#35648d" />
<path d="M860.1 285.2L892.6 281.6L932.3 272.7L932.3 276.0L892.6 284.5L860.8 288.1Z" fill="#4f90ca" />
<path d="M883.4 312.1L955.2 299.6L964.8 311.7L969.6 318.9L928.7 328.5L898.6 330.9Z" fill="#35648d" />
<path d="M898.6 330.9L928.7 328.5L969.6 318.9L969.6 322.3L928.7 331.4L899.3 333.8Z" fill="#4f90ca" />
<path d="M919.6 359.3L992.5 346.6L1000.9 355.5L1006.9 364.6L964.8 374.3L934.7 377.9Z" fill="#35648d" />
<path d="M934.7 377.9L964.8 374.3L1006.9 364.6L1006.9 368.0L964.8 377.1L935.4 380.8Z" fill="#4f90ca" />
<circle cx="863.7" cy="267.6" r="1.5" fill="#6fa6d8"/>
<circle cx="869.7" cy="276.8" r="1.5" fill="#6fa6d8"/>
<circle cx="900.3" cy="313.6" r="1.5" fill="#6fa6d8"/>
<circle cx="907.0" cy="323.2" r="1.5" fill="#6fa6d8"/>
<circle cx="936.6" cy="360.3" r="1.5" fill="#6fa6d8"/>
<circle cx="943.1" cy="369.9" r="1.5" fill="#6fa6d8"/>
<defs><linearGradient id="btnf" gradientUnits="userSpaceOnUse" x1="1010" y1="370" x2="1114" y2="360"><stop offset="0" stop-color="#5a9bd6"/><stop offset="0.85" stop-color="#4f8fc9"/><stop offset="1" stop-color="#3d75a8"/></linearGradient></defs>
<path d="M937.1 275.6L1038.2 252.7L1046.7 261.1L948.0 283.3L938.8 283.3Z" fill="#5596d0" />
<path d="M911.4 235.8L1006.9 214.9L1014.2 219.0L1039.0 252.7L937.1 275.6L926.3 265.9L911.9 243.1Z" fill="#315d82" />
<path d="M974.4 320.8L1076.8 297.7L1085.2 307.3L985.3 329.0L976.1 329.0Z" fill="#5596d0" />
<path d="M948.0 283.3L1046.7 261.1L1051.0 264.0L1077.2 297.7L974.4 320.8L964.8 311.7Z" fill="#315d82" />
<path d="M1010.6 365.1L1109.3 342.2L1114.1 349.0L1115.0 370.6L1014.2 394.0Z" fill="url(#btnf)" />
<path d="M985.3 329.0L1085.2 307.3L1089.5 310.7L1109.7 342.2L1010.6 365.1L1000.9 355.5Z" fill="#315d82" />
<path d="M1087.1 377.9L1089.5 381.5" fill="none" stroke="#3f78ad" stroke-width="1.5" />
<path d="M521.3 389.3L531.5 386.5L533.0 422.6L523.1 425.4Z" fill="#3f79ae" />
<path d="M527.8 423.5L528.1 431.9" stroke="#4585bd" stroke-width="1.5" fill="none"/>
<circle cx="562.0" cy="395.7" r="32.3" fill="#4a89c2"/>
<circle cx="562.0" cy="395.7" r="26.2" fill="none" stroke="#fff" stroke-width="7" stroke-dasharray="1.15 2.05"/>
<circle cx="562.0" cy="395.7" r="31.6" fill="none" stroke="#4585bd" stroke-width="1.6"/>
<circle cx="562.0" cy="395.7" r="0.9" fill="#7fb4e6"/>
<circle cx="551.0" cy="397.7" r="0.9" fill="#7fb4e6"/>
<circle cx="573.0" cy="393.7" r="0.9" fill="#7fb4e6"/>
<circle cx="564.0" cy="404.7" r="0.9" fill="#7fb4e6"/>
<circle cx="560.0" cy="386.7" r="0.9" fill="#7fb4e6"/>
<path d="M536.1 430.9L536.5 438.7" stroke="#4585bd" stroke-width="1.5" fill="none"/>
<path d="M543.5 428.5L543.9 436.3" stroke="#4585bd" stroke-width="1.5" fill="none"/>
<path d="M550.0 426.3L550.4 434.1" stroke="#4585bd" stroke-width="1.5" fill="none"/>
<path d="M532.6 407.0L551.5 402.6L552.2 424.4L534.4 431.1Z" fill="#4f90ca" />
<path d="M531.5 404.1L547.2 400.0L551.5 402.6L535.2 407.0Z" fill="#315d82" />
<path d="M590.7 414.3L591.1 422.6" stroke="#4585bd" stroke-width="1.5" fill="none"/>
<path d="M600.0 411.5L600.4 419.8" stroke="#4585bd" stroke-width="1.5" fill="none"/>
<path d="M586.3 393.5L602.2 389.8L603.0 411.5L588.1 415.6Z" fill="#4f90ca" />
<path d="M585.6 391.5L599.6 388.0L602.2 389.8L587.8 393.5Z" fill="#315d82" />
<path d="M618.5 393.0Q622.2 400.4 627.8 404.1" stroke="#3f79ae" stroke-width="1.8" fill="none" stroke-linecap="round"/>
<path d="M641.7 389.3Q646.3 393.0 650.0 396.7" stroke="#3f79ae" stroke-width="1.8" fill="none" stroke-linecap="round"/>
<path d="M608.3 371.1L633.3 366.7L636.7 369.3L637.4 380.9L611.1 385.9L607.8 383.0Z" fill="#4f90ca" />
<path d="M613.3 378.5L638.0 374.1L641.5 377.0L641.9 389.3L617.0 394.1L613.3 391.1Z" fill="#5a9bd6" />
<path d="M657.4 387.4Q658.3 374.4 667.6 369.3" stroke="#3f79ae" stroke-width="1.6" fill="none" stroke-linecap="round"/>
<path d="M661.1 391.1Q662.0 379.1 671.3 376.3" stroke="#3f79ae" stroke-width="1.6" fill="none" stroke-linecap="round"/>
<path d="M664.8 393.9Q665.7 384.6 674.1 382.2" stroke="#3f79ae" stroke-width="1.6" fill="none" stroke-linecap="round"/>
<path d="M685.2 367.4Q693.5 369.8 694.4 382.8" stroke="#3f79ae" stroke-width="1.6" fill="none" stroke-linecap="round"/>
<path d="M687.0 374.1Q696.3 376.3 697.8 387.4" stroke="#3f79ae" stroke-width="1.6" fill="none" stroke-linecap="round"/>
<path d="M688.9 379.6Q692.6 383.7 690.7 389.3" stroke="#3f79ae" stroke-width="1.6" fill="none" stroke-linecap="round"/>
<path d="M668.9 369.6L683.3 366.9" stroke="#4f90ca" stroke-width="6.3" stroke-linecap="round" fill="none"/>
<path d="M671.7 376.1L686.1 373.3" stroke="#4f90ca" stroke-width="6.3" stroke-linecap="round" fill="none"/>
<path d="M674.1 382.0L688.5 379.3" stroke="#4f90ca" stroke-width="6.3" stroke-linecap="round" fill="none"/>
<path d="M671.3 391.1L684.3 388.5" stroke="#4f90ca" stroke-width="7.0" stroke-linecap="round" fill="none"/>
<path d="M714.8 389.3Q720.7 394.8 721.5 409.6" stroke="#3f79ae" stroke-width="1.8" fill="none" stroke-linecap="round"/>
<path d="M726.9 385.6Q732.6 391.1 733.7 406.9" stroke="#3f79ae" stroke-width="1.8" fill="none" stroke-linecap="round"/>
<path d="M707.8 380.4L712.6 378.5L720.0 390.7L714.8 392.6Z" fill="#2c557a" />
<path d="M720.0 377.8L724.8 375.9L731.9 386.5L727.0 388.5Z" fill="#2c557a" />
<path d="M734.3 383.0L734.6 387.0" stroke="#4585bd" stroke-width="1.1" fill="none"/>
<path d="M745.4 380.2L745.7 384.3" stroke="#4585bd" stroke-width="1.1" fill="none"/>
<path d="M756.5 377.4L756.9 381.5" stroke="#4585bd" stroke-width="1.1" fill="none"/>
<path d="M767.6 374.6L768.0 378.7" stroke="#4585bd" stroke-width="1.1" fill="none"/>
<path d="M725.9 354.6L732.4 363.0L734.3 383.3L726.9 373.1Z" fill="#3f79ae" />
<path d="M732.4 363.0L781.1 350.9L782.4 371.3L734.3 383.3Z" fill="#4f90ca" />
<path d="M725.9 354.6L744.4 350.0L748.1 345.4L771.3 339.8L781.1 350.9L732.4 363.0Z" fill="#315d82" />
<path d="M725.9 354.6L744.4 350.0L751.9 357.8L732.4 363.0Z" fill="#3f74a6" />
<path d="M744.4 350.4L748.5 345.7L751.9 348.5L749.1 353.3Z" fill="#3d6f9d" />
<path d="M749.1 403.7L749.4 407.8" stroke="#4585bd" stroke-width="1.1" fill="none"/>
<path d="M760.2 400.9L760.6 405.0" stroke="#4585bd" stroke-width="1.1" fill="none"/>
<path d="M771.3 398.1L771.7 402.2" stroke="#4585bd" stroke-width="1.1" fill="none"/>
<path d="M782.4 395.4L782.8 399.4" stroke="#4585bd" stroke-width="1.1" fill="none"/>
<path d="M740.7 375.4L747.2 383.7L749.1 404.1L741.7 393.9Z" fill="#3f79ae" />
<path d="M747.2 383.7L795.9 371.7L797.2 392.0L749.1 404.1Z" fill="#4f90ca" />
<path d="M740.7 375.4L759.3 370.7L763.0 366.1L786.1 360.6L795.9 371.7L747.2 383.7Z" fill="#315d82" />
<path d="M740.7 375.4L759.3 370.7L766.7 378.5L747.2 383.7Z" fill="#3f74a6" />
<path d="M759.3 371.1L763.3 366.5L766.7 369.3L763.9 374.1Z" fill="#3d6f9d" />
<path d="M644.4 426.7L644.8 435.0" stroke="#4585bd" stroke-width="1.5" fill="none"/>
<path d="M653.7 424.6L654.1 433.0" stroke="#4585bd" stroke-width="1.5" fill="none"/>
<path d="M663.0 422.6L663.3 430.9" stroke="#4585bd" stroke-width="1.5" fill="none"/>
<path d="M672.2 420.6L672.6 428.9" stroke="#4585bd" stroke-width="1.5" fill="none"/>
<path d="M681.5 418.5L681.9 426.9" stroke="#4585bd" stroke-width="1.5" fill="none"/>
<path d="M690.7 416.5L691.1 424.8" stroke="#4585bd" stroke-width="1.5" fill="none"/>
<path d="M700.0 414.4L700.4 422.8" stroke="#4585bd" stroke-width="1.5" fill="none"/>
<path d="M708.3 412.6L708.7 420.9" stroke="#4585bd" stroke-width="1.5" fill="none"/>
<path d="M629.6 403.1L637.0 411.5L638.9 427.8L631.9 419.3Z" fill="#3f79ae" />
<path d="M637.0 411.5L711.1 395.2L712.2 411.5L638.9 427.8Z" fill="#4f90ca" />
<path d="M629.6 403.1L702.8 388.0L711.1 394.8L637.0 411.5Z" fill="#315d82" />
<ellipse cx="655.9" cy="401.3" rx="4.6" ry="5.2" fill="#35648d" transform="rotate(-30 655.9 401.3)"/>
<ellipse cx="621.3" cy="435.9" rx="12.5" ry="35" fill="#3a6fa1" stroke="#4f90ca" stroke-width="2.2" transform="rotate(-12 621.3 435.9)"/>
<ellipse cx="620.3" cy="435.9" rx="8" ry="29" fill="none" stroke="#2b557c" stroke-width="5" stroke-dasharray="1 1.3" transform="rotate(-12 621.3 435.9)"/>
<path d="M597.2 448.5L597.6 459.6" stroke="#4585bd" stroke-width="1.5" fill="none"/>
<path d="M600.9 448.5L601.3 459.6" stroke="#4585bd" stroke-width="1.5" fill="none"/>
<path d="M613.9 467.0L614.3 477.2" stroke="#4585bd" stroke-width="1.5" fill="none"/>
<path d="M617.6 467.0L618.0 477.2" stroke="#4585bd" stroke-width="1.5" fill="none"/>
<path d="M590.4 418.9L600.0 417.0L603.7 426.3L608.3 441.1L607.4 457.8L593.5 449.4Z" fill="#4585bd" />
<path d="M607.4 443.3L620.4 441.1L622.6 470.7L609.6 467.4Z" fill="#4585bd" />
<path d="M769.4 409.6Q762.0 413.3 761.5 426.3" stroke="#3f79ae" stroke-width="1.8" fill="none" stroke-linecap="round"/>
<path d="M772.2 408.1L788.0 405.0" stroke="#4f90ca" stroke-width="6.3" stroke-linecap="round" fill="none"/>
<path d="M778.3 443.5L778.7 447.6" stroke="#4585bd" stroke-width="1.1" fill="none"/>
<path d="M789.4 440.7L789.8 444.8" stroke="#4585bd" stroke-width="1.1" fill="none"/>
<path d="M800.6 438.0L800.9 442.0" stroke="#4585bd" stroke-width="1.1" fill="none"/>
<path d="M811.7 435.2L812.0 439.3" stroke="#4585bd" stroke-width="1.1" fill="none"/>
<path d="M770.0 415.2L776.5 423.5L778.3 443.9L770.9 433.7Z" fill="#3f79ae" />
<path d="M776.5 423.5L825.2 411.5L826.5 431.9L778.3 443.9Z" fill="#4f90ca" />
<path d="M770.0 415.2L788.5 410.6L792.2 405.9L815.4 400.4L825.2 411.5L776.5 423.5Z" fill="#315d82" />
<path d="M770.0 415.2L788.5 410.6L795.9 418.3L776.5 423.5Z" fill="#3f74a6" />
<path d="M788.5 410.9L792.6 406.3L795.9 409.1L793.1 413.9Z" fill="#3d6f9d" />
<path d="M703.7 443.0L704.1 452.2" stroke="#4585bd" stroke-width="1.5" fill="none"/>
<path d="M712.0 441.3L712.4 450.6" stroke="#4585bd" stroke-width="1.5" fill="none"/>
<path d="M721.3 439.4L721.7 448.7" stroke="#4585bd" stroke-width="1.5" fill="none"/>
<path d="M729.6 437.8L730.0 447.0" stroke="#4585bd" stroke-width="1.5" fill="none"/>
<path d="M654.8 440.4L751.1 421.5L752.2 431.5L657.8 450.7Z" fill="#4f90ca" />
<path d="M653.7 433.7L742.6 413.7L751.1 421.1L661.5 441.1Z" fill="#315d82" />
<path d="M636.1 441.1L646.3 434.1L653.7 441.1L654.1 461.9L643.0 463.7L635.2 456.3Z" fill="#3d74a8" />
<path d="M640.7 436.5L648.1 433.7L654.1 441.1L647.2 443.9Z" fill="#315d82" />
<path d="M647.2 462.4L647.6 469.8" stroke="#4585bd" stroke-width="1.5" fill="none"/>
<path d="M650.9 462.4L651.3 469.8" stroke="#4585bd" stroke-width="1.5" fill="none"/>
<path d="M680.0 445.2L699.1 443.3L699.6 465.2L683.0 467.4Z" fill="#4585bd" />
<ellipse cx="689.6" cy="444.4" rx="9.6" ry="3.2" fill="#35648d" transform="rotate(-8 689.6 444.4)"/>
<path d="M657.4 472.6Q657.4 459.6 663.9 455.9" stroke="#3f79ae" stroke-width="1.8" fill="none" stroke-linecap="round"/>
<path d="M667.6 457.8L668.0 463.3" stroke="#4585bd" stroke-width="1.5" fill="none"/>
<path d="M673.1 457.8L673.5 463.3" stroke="#4585bd" stroke-width="1.5" fill="none"/>
<ellipse cx="670.4" cy="454.1" rx="8.5" ry="4" fill="#4f90ca" transform="rotate(-12 670.4 454.1)"/>
<path d="M661.5 493.9Q663.0 478.1 678.1 474.4" stroke="#3f79ae" stroke-width="1.8" fill="none" stroke-linecap="round"/>
<path d="M700.9 468.0Q718.5 466.1 720.4 480.9" stroke="#3f79ae" stroke-width="1.8" fill="none" stroke-linecap="round"/>
<path d="M680.6 474.1L698.5 470.2" stroke="#4f90ca" stroke-width="9.6" stroke-linecap="round" fill="none"/>
<path d="M590.7 509.3Q592.2 493.0 608.9 490.0" stroke="#3f79ae" stroke-width="1.8" fill="none" stroke-linecap="round"/>
<path d="M631.9 484.4Q648.1 481.5 650.4 496.3" stroke="#3f79ae" stroke-width="1.8" fill="none" stroke-linecap="round"/>
<path d="M611.1 489.6L629.6 485.6" stroke="#4f90ca" stroke-width="9.6" stroke-linecap="round" fill="none"/>
<path d="M550.9 495.7L551.3 503.1" stroke="#4585bd" stroke-width="1.5" fill="none"/>
<path d="M555.6 495.7L555.9 503.1" stroke="#4585bd" stroke-width="1.5" fill="none"/>
<path d="M546.3 475.4L563.9 472.6L565.9 493.0L555.6 497.6L549.6 495.7Z" fill="#4585bd" />
<ellipse cx="555.2" cy="474.4" rx="9" ry="3.4" fill="#3d74a8" transform="rotate(-8 555.2 474.4)"/>
<path d="M552.2 518.9Q552.8 505.9 559.6 503.3" stroke="#3f79ae" stroke-width="1.8" fill="none" stroke-linecap="round"/>
<path d="M571.3 501.3Q580.7 500.4 582.0 513.3" stroke="#3f79ae" stroke-width="1.8" fill="none" stroke-linecap="round"/>
<ellipse cx="564.8" cy="502.2" rx="7.6" ry="3.6" fill="#4f90ca" transform="rotate(-14 564.8 502.2)"/>
<path d="M722.2 460.6Q723.7 448.5 733.0 444.1" stroke="#3f79ae" stroke-width="1.6" fill="none" stroke-linecap="round"/>
<path d="M748.1 439.3Q757.8 440.7 758.9 451.3" stroke="#3f79ae" stroke-width="1.6" fill="none" stroke-linecap="round"/>
<path d="M721.9 471.7Q723.7 457.8 731.5 453.7" stroke="#3f79ae" stroke-width="1.6" fill="none" stroke-linecap="round"/>
<path d="M725.0 477.2Q726.9 465.2 734.3 461.9" stroke="#3f79ae" stroke-width="1.6" fill="none" stroke-linecap="round"/>
<path d="M749.1 457.8Q759.3 459.3 761.5 471.7" stroke="#3f79ae" stroke-width="1.6" fill="none" stroke-linecap="round"/>
<path d="M746.3 450.0Q756.5 451.3 759.3 463.3" stroke="#3f79ae" stroke-width="1.6" fill="none" stroke-linecap="round"/>
<path d="M733.7 443.0L747.8 439.6" stroke="#4f90ca" stroke-width="6.3" stroke-linecap="round" fill="none"/>
<path d="M731.9 453.0L745.9 450.0" stroke="#4f90ca" stroke-width="6.3" stroke-linecap="round" fill="none"/>
<path d="M734.4 461.5L748.5 458.1" stroke="#4f90ca" stroke-width="6.3" stroke-linecap="round" fill="none"/>
<defs><linearGradient id="bsg" gradientUnits="userSpaceOnUse" x1="436" y1="0" x2="640" y2="0"><stop offset="0" stop-color="#35689a"/><stop offset="0.5" stop-color="#447fb6"/><stop offset="1" stop-color="#4c8cc6"/></linearGradient></defs>
<path d="M443.3 715.8L435.8 730.8L437.5 756.7L488.3 828.3L603.3 832.0L620.0 831.7L780.0 796.7L894.3 771.3L895.5 764.1L914.7 748.4L913.5 730.4L901.5 715.9L875.0 675.0L850.9 634.1L829.3 614.8L814.8 600.4L540.4 646.1L516.3 673.1Z" fill="url(#bsg)" />
<path d="M483.3 821.7L618.3 824.2L894.7 758.8L895.5 764.1L894.3 771.3L620.0 831.7L603.3 832.0L488.3 828.3Z" fill="#4381b9" />
<path d="M443.3 715.8L483.3 771.7L615.8 773.3L780.0 735.3L856.9 722.7L901.5 715.9L913.5 730.4L780.0 753.3L616.7 790.8L484.2 789.2L435.8 730.8Z" fill="#5394ce" />
<path d="M443.3 715.8L483.3 771.7L484.2 789.2L435.8 730.8Z" fill="#3b72a6" />
<path d="M484.2 789.5L616.7 791.2L780.0 753.7L914.0 731.1" fill="none" stroke="#3a70a3" stroke-width="1.6" />
<path d="M442.9 717.1L516.3 673.1L554.8 666.6L819.6 614.8L821.6 617.2L802.8 645.6L802.8 656.9L554.8 706.3L503.1 725.6L469.4 746.7Z" fill="#4f90ca" />
<path d="M442.9 717.1L516.3 673.1L554.8 666.6L819.6 614.8L821.6 617.2L802.8 645.6L535.6 701.0L446.5 721.2Z" fill="#5596d0" />
<defs><linearGradient id="chg" gradientUnits="userSpaceOnUse" x1="443" y1="0" x2="556" y2="0"><stop offset="0" stop-color="#2a5886"/><stop offset="0.6" stop-color="#3d74a9"/><stop offset="1" stop-color="#5092cc"/></linearGradient></defs>
<path d="M442.9 717.1L516.3 673.1L554.8 666.6L564.4 694.7L535.6 701.0L446.5 721.2Z" fill="url(#chg)" />
<path d="M447.0 722.2L536.0 702.0L803.3 646.6" fill="none" stroke="#35648d" stroke-width="2.6" />
<path d="M445.0 717.6L469.4 746.7L503.1 725.6L554.8 706.3L802.8 656.9L856.9 722.7L627.5 770.8L615.8 773.3L483.3 771.7Z" fill="#315d82" />
<path d="M445.0 717.6L469.4 746.7L503.1 725.6L554.8 706.3L535.6 701.0L446.5 721.2Z" fill="#2f5a80" />
<path d="M802.8 644.9L821.6 616.7L834.1 614.8L902.7 715.9L856.9 722.7Z" fill="#2b5479" />
<path d="M805.2 646.1L826.9 641.3L878.6 715.9L856.9 722.2Z" fill="#356590" />
<path d="M826.9 640.8L843.7 636.5L891.9 711.1L878.6 715.9Z" fill="#244a6c" />
<path d="M854.5 655.7L860.6 653.3L863.4 682.2L858.6 684.6Z" fill="#4f90ca" />
<path d="M545.2 754.9L588.5 740.0L603.0 734.0L627.0 741.2L632.3 749.6L624.6 755.4L588.5 746.0L551.2 753.0Z" fill="#4a89c4" />
<path d="M519.7 691.9v6.5a6.3 3.1 0 0 0 12.5 0v-6.5z" fill="#4585bd"/>
<ellipse cx="525.9" cy="691.9" rx="6.3" ry="3.1" fill="#5a9bd6" stroke="#35648d" stroke-width="0.8"/>
<path d="M847.6 630.5v6.5a5.8 2.9 0 0 0 11.6 0v-6.5z" fill="#4585bd"/>
<ellipse cx="853.3" cy="630.5" rx="5.8" ry="2.9" fill="#5a9bd6" stroke="#35648d" stroke-width="0.8"/>
<ellipse cx="488.6" cy="746.5" rx="3.4" ry="2" fill="#4a89c4"/>
<ellipse cx="800.4" cy="663.0" rx="3.4" ry="2" fill="#4a89c4"/>
<path d="M522.3 733.3L529.5 731.8L530.3 740.0L523.5 741.4Z" fill="#4585bd" />
<g clip-path="url(#belowclip)"><path d="M1178.8 203.0L1840.2 1127.6M1396.4 240.3L-665.8 698.7M1096.5 221.3L1757.9 1146.0M1422.9 277.3L-639.2 735.8M1014.1 239.6L1675.6 1164.3M1449.4 314.3L-612.7 772.8M931.7 257.9L1593.3 1182.7M1475.8 351.3L-586.2 809.9M849.3 276.2L1511.0 1201.1M1502.3 388.3L-559.7 847.0M766.9 294.5L1428.6 1219.5M1528.7 425.3L-533.1 884.0M684.5 312.8L1346.3 1237.9M1555.2 462.3L-506.6 921.1M602.0 331.1L1263.9 1256.2M1581.6 499.2L-480.1 958.1M519.6 349.4L1181.5 1274.6M1608.1 536.2L-453.6 995.2M437.1 367.8L1099.1 1293.0M1634.5 573.2L-427.0 1032.2M354.6 386.1L1016.7 1311.4M1661.0 610.2L-400.5 1069.3M272.1 404.4L934.3 1329.8M1687.4 647.2L-374.0 1106.3M189.6 422.8L851.9 1348.2M1713.9 684.1L-347.5 1143.4M107.1 441.1L769.4 1366.6M1740.3 721.1L-320.9 1180.4M24.6 459.4L687.0 1385.0M1766.8 758.1L-294.4 1217.4M-58.0 477.8L604.5 1403.4M1793.2 795.1L-267.9 1254.5M-140.6 496.1L522.0 1421.9M1819.7 832.1L-241.4 1291.5M-223.1 514.5L439.5 1440.3M1846.1 869.0L-214.9 1328.6M-305.7 532.8L357.0 1458.7M1872.6 906.0L-188.3 1365.6M-388.3 551.2L274.5 1477.1M1899.0 943.0L-161.8 1402.7" stroke="#d4e2ee" stroke-width="1" fill="none" opacity="0.9"/><path d="M784.4 719.6L372.1 811.4" stroke="#f0a0a0" stroke-width="1.6" fill="none"/><path d="M784.4 719.6L908.0 692.1" stroke="#eef2f6" stroke-width="1.6" fill="none"/><path d="M784.4 719.6L797.6 738.1" stroke="#8fe08f" stroke-width="2" fill="none"/></g>
<path d="M528.3 769.4L551.2 752.5L588.5 746.0L624.6 754.9L627.5 770.3L612.6 774.2L550.0 772.3Z" fill="#fff" />
<clipPath id="holeclip"><path d="M528.3 769.4L551.2 752.5L588.5 746.0L624.6 754.9L627.5 770.3L612.6 774.2L550.0 772.3Z"/></clipPath>
<g clip-path="url(#holeclip)"><path d="M783.5 718.5L50 883.5" stroke="#d42020" stroke-width="2.4" stroke-dasharray="2.2 1.6" fill="none"/><!--HOLEGRID--></g>
<path d="M439.5 614.5L439.5 618.4L440.0 622.2L441.1 625.9L442.6 629.6L444.7 633.2L447.3 636.6L450.5 640.0L454.1 643.2L458.2 646.2L462.7 649.1L467.7 651.8L473.1 654.3L478.9 656.6L485.0 658.7L491.5 660.5L498.3 662.2L505.4 663.6L512.7 664.7L520.3 665.6L528.0 666.3L535.9 666.7L543.9 666.8L552.0 666.7L560.1 666.3L568.2 665.7L576.3 664.8L584.4 663.7L592.3 662.3L600.2 660.7L869.6 603.5L868.8 609.2L599.8 666.3L591.9 667.9L584.0 669.3L575.9 670.4L567.8 671.3L559.7 671.9L551.6 672.3L543.5 672.4L535.5 672.3L527.6 671.9L519.9 671.2L512.3 670.3L505.0 669.2L497.9 667.8L491.1 666.1L484.6 664.3L478.5 662.2L472.7 659.9L467.3 657.4L462.3 654.7L457.8 651.8L453.7 648.8L450.1 645.6L446.9 642.2L444.3 638.8L442.2 635.2L440.7 631.5L439.6 627.8L439.1 624.0L439.1 620.1Z" fill="#4f90ca" />
<path d="M600.2 660.7L590.6 662.6L580.9 664.2L571.1 665.4L561.2 666.2L551.3 666.7L541.5 666.8L531.8 666.5L522.3 665.8L513.1 664.8L504.2 663.3L495.7 661.6L487.6 659.4L480.0 657.0L472.9 654.2L466.4 651.1L460.5 647.8L455.3 644.1L450.8 640.3L447.0 636.2L444.0 632.0L441.7 627.6L440.2 623.1L439.5 618.4L439.6 613.7L440.5 609.0L442.2 604.3L444.6 599.6L447.9 594.9L451.8 590.3L456.5 585.9L461.9 581.6L467.9 577.4L474.6 573.5L481.8 569.8L489.5 566.3L497.7 563.1L506.3 560.2L515.3 557.6L524.6 555.3L794.6 497.3L869.6 603.5Z" fill="#315d82" />
<path d="M541.5 589.6L604.6 599.2L573.8 633.3L508.1 620.8Z" fill="#2b5479" />
<path d="M543.5 594.6L599.8 603.8L573.3 632.5L513.3 621.2Z" fill="#fff" />
<ellipse cx="464.4" cy="631.2" rx="4.6" ry="2.7" fill="#4a89c4" stroke="#2b5479" stroke-width="0.8"/>
<ellipse cx="782.1" cy="508.3" rx="2.6" ry="1.8" fill="#3f79ae"/>
<ellipse cx="845.6" cy="597.3" rx="2.6" ry="1.8" fill="#3f79ae"/>
<ellipse cx="789.4" cy="557.5" rx="6.4" ry="5.4" fill="#4a89c4"/>
<ellipse cx="789.4" cy="560.4" rx="5.6" ry="3.6" fill="#fff"/>
<ellipse cx="811.7" cy="553.0" rx="6.4" ry="5.4" fill="#4a89c4"/>
<ellipse cx="811.7" cy="555.8" rx="5.6" ry="3.6" fill="#fff"/>
<path d="M793.5 556.2L808.1 553.5L809.2 557.7L794.6 560.4Z" fill="#4a89c4" />
<g transform="scale(0.71942,1)" fill="none">
<path d="M1290.3 665.0C1299.2 662.8 1324.8 655.0 1343.7 651.7C1362.6 648.4 1386.2 645.8 1403.9 645.0C1421.6 644.2 1437.1 644.8 1450.2 646.7C1463.3 648.7 1471.1 651.7 1482.7 656.7C1494.3 661.7 1504.3 669.8 1519.7 676.7C1535.1 683.6 1554.4 692.2 1575.3 698.3C1596.1 704.4 1621.6 709.8 1644.8 713.3C1668.0 716.8 1691.1 719.0 1714.3 719.3C1737.5 719.6 1760.6 718.2 1783.8 715.0C1807.0 711.8 1832.4 706.4 1853.3 700.0C1874.1 693.6 1895.4 685.0 1908.9 676.7C1922.4 668.4 1930.2 657.8 1934.5 650.0C1938.7 642.2 1938.7 637.2 1934.5 630.0C1930.2 622.8 1922.4 613.9 1908.9 606.7" stroke="#34699c" stroke-width="20.40" opacity="1" stroke-linecap="butt"/>
<path d="M1908.9 606.7C1895.4 599.5 1874.1 593.7 1853.3 586.7C1832.4 579.8 1801.5 572.2 1783.8 565.0C1766.0 557.8 1755.3 550.8 1746.8 543.3C1738.3 535.8 1733.7 527.2 1732.9 520.0C1732.1 512.8 1735.1 505.8 1742.1 500.0C1749.0 494.2 1759.9 488.6 1774.6 485.0C1789.3 481.4 1809.4 479.2 1830.2 478.3C1851.1 477.4 1878.9 477.6 1899.7 479.3" stroke="#34699c" stroke-width="19.58" opacity="1" stroke-linecap="butt"/>
<path d="M1899.7 479.3C1920.6 481.0 1938.3 484.3 1955.3 488.3C1972.3 492.3 1987.6 498.1 2001.6 503.3C2015.6 508.5 2023.7 514.2 2039.3 519.6C2054.9 525.0 2076.6 530.6 2095.3 535.7C2114.0 540.9 2132.6 547.1 2151.3 550.5C2170.0 553.9 2188.6 556.6 2207.3 555.9C2226.0 555.2 2245.9 551.2 2263.3 546.5C2280.8 541.8 2298.8 534.9 2311.8 527.7" stroke="#34699c" stroke-width="18.77" opacity="1" stroke-linecap="butt"/>
<path d="M2311.8 527.7C2324.9 520.5 2335.4 511.6 2341.6 503.5C2347.8 495.4 2347.5 487.0 2349.1 479.4C2350.7 471.8 2347.9 464.2 2351.0 457.9C2354.2 451.6 2358.7 446.3 2367.7 441.8C2376.7 437.3 2388.3 433.7 2405.1 431.0C2421.9 428.3 2448.6 426.1 2468.5 425.7" stroke="#34699c" stroke-width="18.05" opacity="1" stroke-linecap="butt"/>
<path d="M2468.5 425.7C2488.4 425.2 2505.8 426.3 2524.5 428.3C2543.2 430.3 2561.9 435.0 2580.5 437.7C2599.2 440.4 2619.1 443.9 2636.6 444.4C2654.0 444.8 2671.1 442.0 2685.1 440.4C2699.1 438.8 2714.6 435.9 2720.5 435.0" stroke="#34699c" stroke-width="17.54" opacity="1" stroke-linecap="butt"/>
<path d="M1289.9 663.4C1298.8 661.2 1324.4 653.4 1343.3 650.1C1362.2 646.8 1385.8 644.2 1403.5 643.4C1421.2 642.6 1436.7 643.1 1449.8 645.1C1462.9 647.1 1470.7 650.1 1482.3 655.1C1493.9 660.1 1503.9 668.2 1519.3 675.1C1534.7 682.0 1554.0 690.6 1574.9 696.7C1595.7 702.8 1621.2 708.2 1644.4 711.7C1667.6 715.2 1690.7 717.4 1713.9 717.7C1737.1 718.0 1760.2 716.6 1783.4 713.4C1806.6 710.2 1832.0 704.8 1852.9 698.4C1873.7 692.0 1895.0 683.4 1908.5 675.1C1922.0 666.8 1929.8 656.2 1934.1 648.4C1938.3 640.6 1938.3 635.6 1934.1 628.4C1929.8 621.2 1922.0 612.3 1908.5 605.1" stroke="#3e7cb4" stroke-width="16.50" opacity="1" stroke-linecap="butt"/>
<path d="M1908.5 605.2C1895.0 597.9 1873.8 592.1 1852.9 585.2C1832.1 578.2 1801.1 570.7 1783.4 563.5C1765.7 556.2 1754.9 549.3 1746.4 541.8C1737.9 534.3 1733.3 525.7 1732.5 518.5C1731.7 511.2 1734.8 504.3 1741.7 498.5C1748.7 492.6 1759.5 487.1 1774.2 483.5C1788.9 479.8 1809.0 477.7 1829.8 476.8C1850.7 475.8 1878.5 476.1 1899.3 477.8" stroke="#3e7cb4" stroke-width="15.84" opacity="1" stroke-linecap="butt"/>
<path d="M1899.3 477.8C1920.2 479.5 1938.0 482.8 1954.9 486.8C1971.9 490.8 1987.2 496.6 2001.2 501.8C2015.2 507.0 2023.3 512.7 2038.9 518.1C2054.5 523.5 2076.2 529.1 2094.9 534.2C2113.6 539.4 2132.3 545.7 2150.9 549.0C2169.6 552.4 2188.3 555.1 2207.0 554.4C2225.6 553.8 2245.5 549.7 2263.0 545.0C2280.4 540.3 2298.4 533.4 2311.5 526.2" stroke="#3e7cb4" stroke-width="15.18" opacity="1" stroke-linecap="butt"/>
<path d="M2311.5 526.3C2324.5 519.1 2335.0 510.1 2341.2 502.1C2347.4 494.0 2347.2 485.6 2348.7 478.0C2350.3 470.4 2347.6 462.8 2350.7 456.5C2353.8 450.2 2358.4 444.9 2367.4 440.4C2376.4 435.9 2388.0 432.3 2404.8 429.6C2421.6 426.9 2448.2 424.7 2468.1 424.3" stroke="#3e7cb4" stroke-width="14.60" opacity="1" stroke-linecap="butt"/>
<path d="M2468.2 424.3C2488.1 423.9 2505.5 424.9 2524.2 426.9C2542.8 428.9 2561.5 433.6 2580.2 436.3C2598.9 439.0 2618.8 442.6 2636.2 443.0C2653.6 443.5 2670.7 440.6 2684.7 439.0C2698.7 437.5 2714.3 434.5 2720.2 433.6" stroke="#3e7cb4" stroke-width="14.19" opacity="1" stroke-linecap="butt"/>
<path d="M1289.5 662.0C1298.4 659.8 1324.0 652.0 1342.9 648.7C1361.8 645.4 1385.4 642.8 1403.1 642.0C1420.8 641.2 1436.3 641.8 1449.4 643.7C1462.5 645.7 1470.3 648.7 1481.9 653.7C1493.5 658.7 1503.5 666.8 1518.9 673.7C1534.3 680.6 1553.6 689.2 1574.5 695.3C1595.3 701.4 1620.8 706.8 1644.0 710.3C1667.2 713.8 1690.3 716.0 1713.5 716.3C1736.7 716.6 1759.8 715.2 1783.0 712.0C1806.2 708.8 1831.6 703.4 1852.5 697.0C1873.3 690.6 1894.6 682.0 1908.1 673.7C1921.6 665.4 1929.4 654.8 1933.7 647.0C1937.9 639.2 1937.9 634.2 1933.7 627.0C1929.4 619.8 1921.6 610.9 1908.1 603.7" stroke="#4585bf" stroke-width="10.50" opacity="1" stroke-linecap="butt"/>
<path d="M1908.1 603.8C1894.6 596.6 1873.4 590.8 1852.5 583.8C1831.7 576.9 1800.8 569.4 1783.0 562.1C1765.3 554.9 1754.5 547.9 1746.0 540.4C1737.6 532.9 1732.9 524.3 1732.1 517.1C1731.4 509.9 1734.4 503.0 1741.3 497.1C1748.3 491.3 1759.2 485.7 1773.8 482.1C1788.5 478.5 1808.6 476.4 1829.4 475.4C1850.3 474.5 1878.1 474.8 1898.9 476.4" stroke="#4585bf" stroke-width="10.08" opacity="1" stroke-linecap="butt"/>
<path d="M1899.0 476.5C1919.8 478.2 1937.6 481.5 1954.6 485.5C1971.6 489.5 1986.9 495.3 2000.9 500.5C2014.9 505.8 2022.9 511.4 2038.5 516.8C2054.1 522.2 2075.9 527.8 2094.6 532.9C2113.2 538.1 2131.9 544.4 2150.6 547.7C2169.2 551.1 2187.9 553.8 2206.6 553.1C2225.3 552.5 2245.2 548.4 2262.6 543.7C2280.0 539.0 2298.1 532.1 2311.1 524.9" stroke="#4585bf" stroke-width="9.66" opacity="1" stroke-linecap="butt"/>
<path d="M2311.1 525.0C2324.2 517.9 2334.7 508.9 2340.9 500.8C2347.1 492.8 2346.8 484.3 2348.4 476.7C2350.0 469.1 2347.2 461.5 2350.3 455.2C2353.4 449.0 2358.0 443.6 2367.0 439.1C2376.0 434.7 2387.6 431.0 2404.4 428.3C2421.2 425.7 2447.9 423.5 2467.8 423.0" stroke="#4585bf" stroke-width="9.29" opacity="1" stroke-linecap="butt"/>
<path d="M2467.8 423.1C2487.7 422.7 2505.2 423.7 2523.8 425.7C2542.5 427.7 2561.2 432.4 2579.8 435.1C2598.5 437.8 2618.4 441.4 2635.9 441.8C2653.3 442.3 2670.4 439.4 2684.4 437.8C2698.4 436.3 2713.9 433.3 2719.8 432.4" stroke="#4585bf" stroke-width="9.03" opacity="1" stroke-linecap="butt"/>
<path d="M1289.3 660.0C1298.2 657.8 1323.8 650.0 1342.7 646.7C1361.6 643.4 1385.2 640.8 1402.9 640.0C1420.6 639.2 1436.1 639.8 1449.2 641.7C1462.3 643.7 1470.1 646.7 1481.7 651.7C1493.3 656.7 1503.3 664.8 1518.7 671.7C1534.1 678.6 1553.4 687.2 1574.3 693.3C1595.1 699.4 1620.6 704.8 1643.8 708.3C1667.0 711.8 1690.1 714.0 1713.3 714.3C1736.5 714.6 1759.6 713.2 1782.8 710.0C1806.0 706.8 1831.4 701.4 1852.3 695.0C1873.1 688.6 1894.4 680.0 1907.9 671.7C1921.4 663.4 1929.2 652.8 1933.5 645.0C1937.7 637.2 1937.7 632.2 1933.5 625.0C1929.2 617.8 1921.4 608.9 1907.9 601.7" stroke="#5192cc" stroke-width="3.60" opacity="0.9" stroke-linecap="butt"/>
<path d="M1907.9 601.9C1894.4 594.7 1873.2 588.9 1852.3 581.9C1831.5 575.0 1800.6 567.4 1782.8 560.2C1765.1 553.0 1754.3 546.0 1745.9 538.5C1737.4 531.0 1732.7 522.4 1732.0 515.2C1731.2 508.0 1734.2 501.0 1741.1 495.2C1748.1 489.4 1759.0 483.8 1773.7 480.2C1788.3 476.6 1808.4 474.4 1829.3 473.5C1850.1 472.6 1877.9 472.8 1898.8 474.5" stroke="#5192cc" stroke-width="3.46" opacity="0.9" stroke-linecap="butt"/>
<path d="M1898.8 474.7C1919.6 476.4 1937.4 479.7 1954.4 483.7C1971.4 487.7 1986.7 493.5 2000.7 498.7C2014.7 503.9 2022.7 509.6 2038.3 515.0C2054.0 520.4 2075.7 526.0 2094.4 531.1C2113.0 536.2 2131.7 542.5 2150.4 545.9C2169.1 549.3 2187.7 552.0 2206.4 551.3C2225.1 550.6 2245.0 546.6 2262.4 541.9C2279.8 537.2 2297.9 530.3 2310.9 523.1" stroke="#5192cc" stroke-width="3.31" opacity="0.9" stroke-linecap="butt"/>
<path d="M2311.0 523.3C2324.0 516.1 2334.5 507.1 2340.7 499.1C2346.9 491.0 2346.6 482.6 2348.2 475.0C2349.8 467.4 2347.1 459.7 2350.2 453.5C2353.3 447.2 2357.8 441.9 2366.8 437.4C2375.9 432.9 2387.4 429.3 2404.2 426.6C2421.0 423.9 2447.7 421.7 2467.6 421.3" stroke="#5192cc" stroke-width="3.19" opacity="0.9" stroke-linecap="butt"/>
<path d="M2467.6 421.4C2487.5 420.9 2505.0 422.0 2523.7 424.0C2542.3 426.0 2561.0 430.7 2579.7 433.4C2598.3 436.1 2618.3 439.6 2635.7 440.1C2653.1 440.5 2670.2 437.7 2684.2 436.1C2698.2 434.5 2713.7 431.6 2719.6 430.7" stroke="#5192cc" stroke-width="3.10" opacity="0.9" stroke-linecap="butt"/>
</g>
<ellipse cx="928.8" cy="665" rx="3.4" ry="9.8" fill="#3b74a8" transform="rotate(12 928.8 665)"/>
<path d="M535.2 841.9L537.4 839.2L541.9 839.2L544.1 842.6L545.6 859.6L548.2 867.8L546.3 870.7L537.4 871.2L535.2 868.8L537.0 859.6Z" fill="#4585bd" />
<path d="M535.9 881.1L542.6 877.4L550.0 878.6L544.1 883.0Z" fill="#35648d" />
<path d="M490.7 913.0L493.7 910.4L496.7 911.2L500.4 947.0L505.3 949.3L504.4 953.0L498.1 955.2L490.7 954.1L489.3 950.7L493.7 947.8Z" fill="#3f79ae" />
<path d="M494.0 913.0L497.4 948.5" fill="none" stroke="#2b5479" stroke-width="2.2" stroke-dasharray="0.9 1.1"/>
<path d="M863.4 783.3L865.4 780.4L869.7 780.4L872.1 783.8L873.8 802.6L876.7 808.6L873.8 811.7L865.9 812.2L863.4 809.3L865.9 802.6Z" fill="#4585bd" />
<path d="M864.2 819.9L870.2 816.6L877.4 818.0L871.4 821.9Z" fill="#35648d" />
<path d="M577.1 972.5L580.8 968.8L633.3 962.3L658.8 936.7L658.8 939.3L633.3 965.0L585.0 972.1L577.3 975.8Z" fill="#4a89c4" />
<path d="M521.2 941.7L545.0 919.2L546.7 916.7L593.3 907.1L601.2 900.4L614.2 900.0L626.7 902.5L634.6 905.4L634.8 907.9L627.5 916.2L630.4 919.3L637.1 912.1L658.8 935.4L658.8 936.8L633.3 962.3L580.8 968.8L577.1 972.5L571.7 965.4L550.0 962.5L542.9 969.6L521.2 945.2Z" fill="#315d82" />
<path d="M521.2 941.7L521.2 945.2L542.9 969.6L543.5 967.1Z" fill="#27507a" />
<path d="M557.5 930.0L601.7 919.2L606.7 918.8L611.2 926.7L606.7 928.9L564.2 939.3Z" fill="#4f90ca" />
<path d="M564.6 939.3L606.7 928.9L614.2 941.2L575.8 950.8Z" fill="#fff" />
<path d="M606.7 928.9L611.2 926.7L621.7 940.0L614.2 941.2Z" fill="#244a6e" />
<path d="M589.2 914.2L592.1 910.4L605.8 910.0L618.3 914.2L625.0 918.3L623.8 921.2L614.2 916.7L604.2 915.0Z" fill="#4f90ca" />
<path d="M542.9 955.8L550.0 956.7L563.3 960.8L576.7 963.3L579.2 965.4L571.7 965.4L556.7 962.9L545.0 959.6Z" fill="#4585bd" />
<path d="M580.8 962.5L585.0 959.2L620.8 952.1L628.3 946.7L637.5 935.8L638.8 934.6L638.8 939.2L630.0 949.3L622.1 955.4L586.2 962.9L583.3 965.4Z" fill="#4585bd" />
<path d="M540.7 937.3L543.2 943.3" fill="none" stroke="#1f4468" stroke-width="1.4" />
<g clip-path="url(#belowclip2)"><path d="M1178.8 203.0L1840.2 1127.6M1396.4 240.3L-665.8 698.7M1096.5 221.3L1757.9 1146.0M1422.9 277.3L-639.2 735.8M1014.1 239.6L1675.6 1164.3M1449.4 314.3L-612.7 772.8M931.7 257.9L1593.3 1182.7M1475.8 351.3L-586.2 809.9M849.3 276.2L1511.0 1201.1M1502.3 388.3L-559.7 847.0M766.9 294.5L1428.6 1219.5M1528.7 425.3L-533.1 884.0M684.5 312.8L1346.3 1237.9M1555.2 462.3L-506.6 921.1M602.0 331.1L1263.9 1256.2M1581.6 499.2L-480.1 958.1M519.6 349.4L1181.5 1274.6M1608.1 536.2L-453.6 995.2M437.1 367.8L1099.1 1293.0M1634.5 573.2L-427.0 1032.2M354.6 386.1L1016.7 1311.4M1661.0 610.2L-400.5 1069.3M272.1 404.4L934.3 1329.8M1687.4 647.2L-374.0 1106.3M189.6 422.8L851.9 1348.2M1713.9 684.1L-347.5 1143.4M107.1 441.1L769.4 1366.6M1740.3 721.1L-320.9 1180.4M24.6 459.4L687.0 1385.0M1766.8 758.1L-294.4 1217.4M-58.0 477.8L604.5 1403.4M1793.2 795.1L-267.9 1254.5M-140.6 496.1L522.0 1421.9M1819.7 832.1L-241.4 1291.5M-223.1 514.5L439.5 1440.3M1846.1 869.0L-214.9 1328.6M-305.7 532.8L357.0 1458.7M1872.6 906.0L-188.3 1365.6M-388.3 551.2L274.5 1477.1M1899.0 943.0L-161.8 1402.7" stroke="#d4e2ee" stroke-width="1" fill="none" opacity="0.9"/></g>
<path d="M718.6 0.0L740.7 244.5" stroke="#0c0cdc" stroke-width="3.3" fill="none"/>
<path d="M747.9 324.0L769.6 564.5" stroke="#0c0cdc" stroke-width="3.3" fill="none"/>
<path d="M775.2 627.0L783.5 719.0" stroke="#0c0cdc" stroke-width="3.3" fill="none"/>
<path d="M710.2 46.3 L717.2 4.0 L718.0 0.0 L720.0 0.0 L721.0 4.0 L734.5 41.5 L733.0 47.0 L722.0 49.5Z" fill="#3535c8" />
<defs><radialGradient id="gs" cx="0.4" cy="0.35" r="0.7"><stop offset="0" stop-color="#fff"/><stop offset="1" stop-color="#aaa"/></radialGradient><linearGradient id="gz" x1="0" x2="1"><stop offset="0" stop-color="#0000c8"/><stop offset="0.5" stop-color="#1a1aff"/><stop offset="1" stop-color="#0000a0"/></linearGradient><linearGradient id="gx" x1="0" x2="0" y1="0" y2="1"><stop offset="0" stop-color="#ff2a2a"/><stop offset="1" stop-color="#a80000"/></linearGradient></defs>
<circle cx="1860.2" cy="301.2" r="12.2" fill="url(#gs)"/>
<path d="M1845.5 222.0 L1858.5 222.0 L1866.0 292.0 L1851.0 294.0Z" fill="url(#gz)" />
<path d="M1839.5 223.0 L1851.6 200.5 L1866.0 222.0 L1862.0 225.0 L1846.0 225.0Z" fill="#0a0ae6" />
<path d="M1850.1 297.5 L1853.3 309.7 L1777.7 328.0 L1774.5 314.0Z" fill="url(#gx)" />
<path d="M1773.0 306.0 L1777.0 331.5 L1747.0 324.5Z" fill="#e00000" />
<path d="M1861.0 303.0 L1870.0 299.0 L1890.0 327.0 L1878.0 333.0Z" fill="#0c8a0c" />
<path d="M1876.0 331.0 L1887.0 326.0 L1899.0 333.0 L1890.0 352.0 L1878.0 345.0Z" fill="#20d020" />
<text x="1856.5" y="201" font-family="Liberation Sans, sans-serif" font-size="46" fill="#1414e0" text-anchor="middle">Z</text>
<text x="1737.5" y="347.5" font-family="Liberation Sans, sans-serif" font-size="46" fill="#e01010" text-anchor="middle">X</text>
<text x="1894.5" y="367.5" font-family="Liberation Sans, sans-serif" font-size="46" fill="#22ee22" text-anchor="middle">Y</text>
<rect x="0" y="0" width="2160" height="112" fill="rgba(238,238,238,0.34)"/>
<rect x="0" y="112" width="112" height="968" fill="rgba(238,238,238,0.34)"/>
<rect x="2050" y="112" width="110" height="968" fill="rgba(238,238,238,0.34)"/>
<rect x="0" y="110.7" width="2050" height="3.3" fill="#e7e7e7"/>
<rect x="110.7" y="114" width="3.3" height="966" fill="#e7e7e7"/>
<rect x="2048.6" y="114" width="3.3" height="966" fill="#e7e7e7"/>
<rect x="0" y="225.2" width="111" height="3.3" fill="#e7e7e7"/>
<rect x="1259.6" y="0" width="3.3" height="111" fill="#e7e7e7"/>
<rect x="1484.8" y="0" width="3.3" height="111" fill="#e7e7e7"/>
<rect x="1820.8" y="0" width="3.3" height="111" fill="#e7e7e7"/>
<rect x="2046.2" y="0" width="3.3" height="111" fill="#e7e7e7"/>
<rect x="2052" y="869.6" width="108" height="108.2" fill="#3d5afe"/>
<path d="M68.9 28.4L37.8 56.7L68.9 85.1" stroke="#000" stroke-width="4.3" fill="none"/>
<text x="109.3" y="71.6" font-family="Liberation Sans, sans-serif" font-size="45" fill="#000" textLength="319.5" lengthAdjust="spacingAndGlyphs">import.wuweido</text>
<path d="M26.2 183.6L55.6 154.6L84.6 183.6" stroke="#000" stroke-width="4.3" fill="none"/>
<path d="M1051.5 156.8L1080 142.8L1108.5 156.8" stroke="#000" stroke-width="2.2" fill="none"/>
<g stroke="#c9c9c9" stroke-width="4.2" fill="none">
<path d="M1346.5 55.5H1290M1318 27L1289.5 55.5L1318 84"/>
<path d="M1401.5 55.5H1458M1430 27L1458.5 55.5L1430 84"/>
<path d="M1512.5 33.7H1574.2M1537 31.7V27H1550.5V31.7M1522.1 41.2V84.2H1564.9V41.2M1536.2 48.8V77.2M1550.7 48.8V77.2"/>
<path d="M1670.8 27.1H1625.8V72.2M1640.1 41.6H1683.2V84.1H1640.1ZM1647.5 62.8H1675.8M1661.7 48.3V77"/>
<path d="M1765 27.1H1736.6V84.2H1794.2V55.8M1744.2 69.6H1786.7"/>
</g>
<g transform="translate(1759.3,61.3) rotate(-45)" fill="#c9c9c9">
<path d="M0 0L9 -5.2V5.2Z"/>
<path d="M9 -5.2H32.5V5.2H9ZM11.5 -2.2V2.2H30V-2.2Z" fill-rule="evenodd"/>
<path d="M35.3 -5.2H45.5V5.2H35.3ZM38.6 -1.6V1.6H42V-1.6Z" fill-rule="evenodd"/>
</g>
<g stroke="#000" stroke-width="4.6" fill="none" stroke-linejoin="miter">
<path d="M1850.6 27H1893L1908.2 41.2V84H1850.6Z"/>
<path d="M1857.9 33.8H1886.5V48.2H1857.9Z"/>
<circle cx="1879.5" cy="69.7" r="7.2"/>
<path d="M2019.2 69.3V41.2L2004 27H1961.6V84H2004.2"/>
<path d="M1968.9 33.8H1997.5V48.2H1968.9Z"/>
<circle cx="1990.5" cy="69.7" r="7.2"/>
<path d="M2002.6 77.1H2021.5M2012 67.7V86.3"/>
</g>
<circle cx="2104.6" cy="33.8" r="7.1" fill="#000"/>
<circle cx="2104.6" cy="55.4" r="7.1" fill="#000"/>
<circle cx="2104.6" cy="77.1" r="7.1" fill="#000"/>
<g stroke="#000" stroke-width="4.2" fill="none" stroke-linejoin="miter">
<path d="M49.5 296.6H35.4V253.2H64.2L78.6 267.8V296.6H64.4"/>
<path d="M64.2 253.2V267.8H78.6"/>
<path d="M28.2 310.8H85.9"/>
</g>
<path d="M55.1 289.1H59.3V293.0H63.6L57.2 303.1L50.8 293.0H55.1Z" fill="#000"/>
<text x="57.4" y="286.3" font-family="Liberation Sans, sans-serif" font-size="14.6" font-weight="bold" text-anchor="middle" textLength="37.5" lengthAdjust="spacingAndGlyphs" fill="#000">BREP</text>
<g stroke="#000" stroke-width="4.2" fill="none" stroke-linejoin="miter">
<path d="M49.5 404.9H35.4V361.5H64.2L78.6 376.1V404.9H64.4"/>
<path d="M64.2 361.5V376.1H78.6"/>
<path d="M28.2 419.1H85.9"/>
</g>
<path d="M55.1 397.4H59.3V401.3H63.6L57.2 411.4L50.8 401.3H55.1Z" fill="#000"/>
<text x="57.4" y="394.6" font-family="Liberation Sans, sans-serif" font-size="17" font-weight="bold" text-anchor="middle" textLength="31.6" lengthAdjust="spacingAndGlyphs" fill="#000">IGES</text>
<g stroke="#000" stroke-width="4.2" fill="none" stroke-linejoin="miter">
<path d="M49.5 513.1H35.4V469.7H64.2L78.6 484.3V513.1H64.4"/>
<path d="M64.2 469.7V484.3H78.6"/>
<path d="M28.2 527.3H85.9"/>
</g>
<path d="M55.1 505.6H59.3V509.5H63.6L57.2 519.6L50.8 509.5H55.1Z" fill="#000"/>
<text x="57.4" y="502.8" font-family="Liberation Sans, sans-serif" font-size="17" font-weight="bold" text-anchor="middle" textLength="35.6" lengthAdjust="spacingAndGlyphs" fill="#000">STEP</text>
<g stroke="#000" stroke-width="3.2" fill="none"><path d="M2106 167.4V146M2106 167.4L2081 184.5M2106 167.4L2131 184.5"/></g>
<path d="M2106 136.6L2111.2 147.6H2100.8Z M2074 189.4L2080.6 179.2L2086.4 187.8Z M2138 189.4L2131.4 179.2L2125.6 187.8Z" fill="#000"/>
<g stroke="#4a4a4a" stroke-width="3.2" fill="none" stroke-linejoin="round"><path d="M2106 246.6L2134.7 258.2V293.3L2106 305L2077.3 293.3V258.2ZM2077.3 258.2L2106 269.5L2134.7 258.2M2106 269.5V305"/></g>
<g stroke="#000" stroke-width="3.4" fill="none"><circle cx="2106" cy="275" r="14.6"/><path d="M2095.5 285.5L2077.5 304M2116.5 285.5L2134.8 304"/></g>
<g stroke="#000" fill="none"><path stroke-width="4.4" d="M2084.3 351.4V415.5M2127.7 351.4V415.5M2073.6 362.1H2138.4M2073.6 405.4H2138.4"/><path stroke-width="2.8" d="M2106 351.4V415.5M2073.6 384H2138.4"/></g>
<g stroke="#000" stroke-width="4.2" fill="none"><path d="M2077.2 463.5H2135.1V476.7H2077.2ZM2084.3 476.7V522.5M2098.6 485.8H2135.1V498.1H2098.6ZM2098.6 507.2H2135.1V520.4H2098.6ZM2084.3 492H2098.6M2084.3 513.6H2098.6"/></g>
<g stroke="#000" stroke-width="4" fill="none" stroke-linejoin="miter"><path d="M2106 571.8L2134.2 585.2L2106 598.6L2077.8 585.2ZM2075.6 599.3L2106 613.9L2136.4 599.3M2075.6 614L2106 628.6L2136.4 614"/></g>
<g stroke="#000" stroke-width="4.2" fill="none"><path d="M2077.2 700.5V678.9H2098.5M2113.5 678.9H2135.1V700.5M2135.1 714.8V736.4H2113.5M2098.5 736.4H2077.2V714.8"/></g>
<g stroke="#000" stroke-width="3.6" fill="none"><path d="M2099.4 809.3H2112.3V822.2H2099.4ZM2105.8 801V793M2105.8 830.5V838.5M2091 815.7H2083M2120.6 815.7H2128.6"/></g>
<path d="M2105.8 784.3L2111.5 794.5H2100.1ZM2105.8 847.3L2111.5 837H2100.1ZM2074.1 815.7L2084.4 810V821.4ZM2137.6 815.7L2127.3 810V821.4Z" fill="#000"/>
<path d="M2135.4 923.5A29.6 14.6 0 1 0 2106 937.3" stroke="#000" stroke-width="3.6" fill="none"/>
<path d="M2114.6 938.6L2103.6 944.6L2104.6 932Z" fill="#000"/>
<path d="M2105.8 1003.3L2133.5 1023.6H2119.5L2114.5 1039.5H2131.3L2105.8 1059.9L2080.3 1039.5H2098L2092.5 1023.6H2078.1Z" stroke="#000" stroke-width="3.6" fill="none" stroke-linejoin="miter"/>
</svg></body></html>
